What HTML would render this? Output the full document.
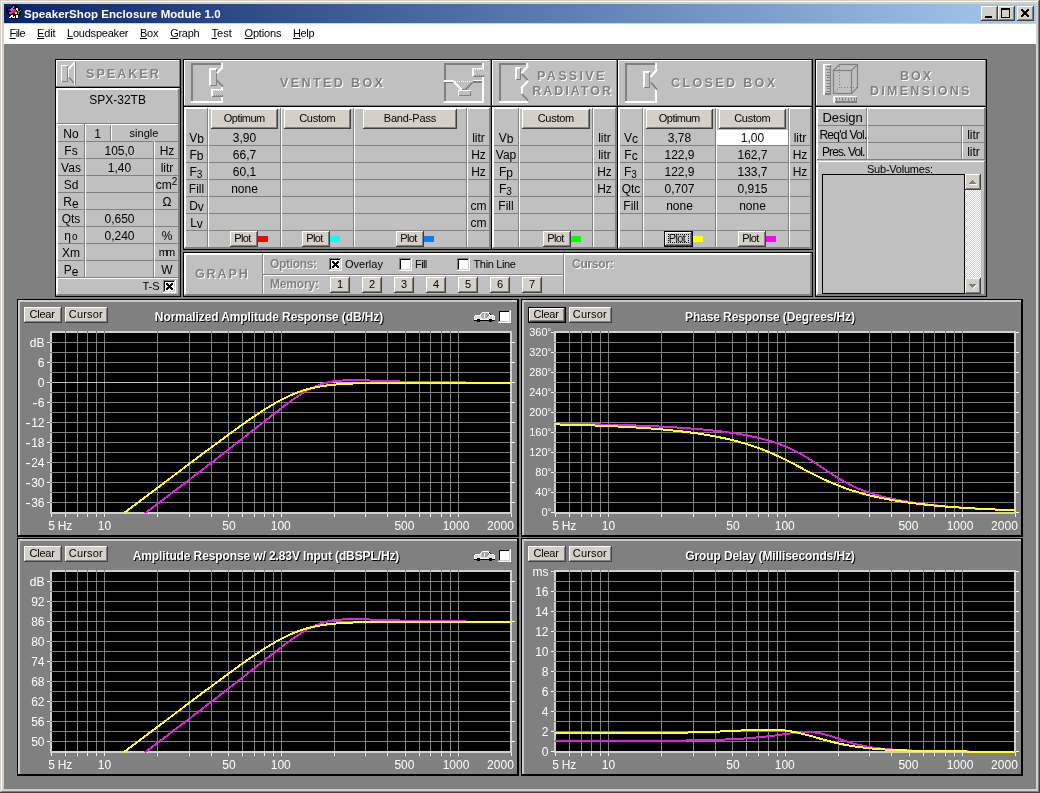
<!DOCTYPE html>
<html><head><meta charset="utf-8"><title>SpeakerShop Enclosure Module 1.0</title>
<style>
html,body{margin:0;padding:0;background:#808080;}
body{width:1040px;height:793px;position:relative;overflow:hidden;font-family:"Liberation Sans",sans-serif;}
#w{position:absolute;left:0;top:0;width:1040px;height:793px;will-change:transform;}
i{position:absolute;display:block;box-sizing:border-box;}
svg{position:absolute;display:block;overflow:visible;}
b.t{position:absolute;display:block;font-weight:normal;white-space:nowrap;overflow:visible;font-style:normal;}
.sb{font-size:10px;position:relative;top:3px;}
sup{font-size:9px;line-height:0;position:relative;top:-1px;vertical-align:super;}
u{text-decoration:underline;}
</style></head>
<body>
<div id="w">
<i style="left:0px;top:0px;width:1040px;height:793px;background:#d4d0c8;"></i>
<i style="left:0px;top:0px;width:1040px;height:1px;background:#d4d0c8;"></i>
<i style="left:0px;top:0px;width:1px;height:793px;background:#d4d0c8;"></i>
<i style="left:1px;top:1px;width:1038px;height:1px;background:#ffffff;"></i>
<i style="left:1px;top:1px;width:1px;height:791px;background:#ffffff;"></i>
<i style="left:0px;top:792px;width:1040px;height:1px;background:#404040;"></i>
<i style="left:1039px;top:0px;width:1px;height:793px;background:#404040;"></i>
<i style="left:1px;top:791px;width:1038px;height:1px;background:#808080;"></i>
<i style="left:1038px;top:1px;width:1px;height:791px;background:#808080;"></i>
<i style="left:4px;top:4px;width:1032px;height:19px;background:;background:linear-gradient(90deg,#0a246a 0%,#a6caf0 100%);"></i>
<i style="left:4px;top:24px;width:1032px;height:20px;background:#ffffff;"></i>
<i style="left:4px;top:44px;width:1032px;height:745px;background:#808080;"></i>
<b class="t" style="left:24.00px;top:8px;height:12px;line-height:12px;font-size:11.5px;color:#fff;font-weight:bold;letter-spacing:0.052px;">SpeakerShop Enclosure Module 1.0</b>
<i style="left:981px;top:6px;width:17px;height:15px;background:#d4d0c8;"></i>
<i style="left:981px;top:6px;width:17px;height:1px;background:#ffffff;"></i>
<i style="left:981px;top:6px;width:1px;height:15px;background:#ffffff;"></i>
<i style="left:981px;top:20px;width:17px;height:1px;background:#404040;"></i>
<i style="left:997px;top:6px;width:1px;height:15px;background:#404040;"></i>
<i style="left:982px;top:19px;width:15px;height:1px;background:#808080;"></i>
<i style="left:996px;top:7px;width:1px;height:13px;background:#808080;"></i>
<i style="left:985px;top:16px;width:7px;height:2px;background:#000000;"></i>
<i style="left:998px;top:6px;width:17px;height:15px;background:#d4d0c8;"></i>
<i style="left:998px;top:6px;width:17px;height:1px;background:#ffffff;"></i>
<i style="left:998px;top:6px;width:1px;height:15px;background:#ffffff;"></i>
<i style="left:998px;top:20px;width:17px;height:1px;background:#404040;"></i>
<i style="left:1014px;top:6px;width:1px;height:15px;background:#404040;"></i>
<i style="left:999px;top:19px;width:15px;height:1px;background:#808080;"></i>
<i style="left:1013px;top:7px;width:1px;height:13px;background:#808080;"></i>
<i style="left:1001px;top:8px;width:9px;height:2px;background:#000000;"></i>
<i style="left:1001px;top:8px;width:1px;height:10px;background:#000000;"></i>
<i style="left:1009px;top:8px;width:1px;height:10px;background:#000000;"></i>
<i style="left:1001px;top:17px;width:9px;height:1px;background:#000000;"></i>
<i style="left:1017px;top:6px;width:17px;height:15px;background:#d4d0c8;"></i>
<i style="left:1017px;top:6px;width:17px;height:1px;background:#ffffff;"></i>
<i style="left:1017px;top:6px;width:1px;height:15px;background:#ffffff;"></i>
<i style="left:1017px;top:20px;width:17px;height:1px;background:#404040;"></i>
<i style="left:1033px;top:6px;width:1px;height:15px;background:#404040;"></i>
<i style="left:1018px;top:19px;width:15px;height:1px;background:#808080;"></i>
<i style="left:1032px;top:7px;width:1px;height:13px;background:#808080;"></i>
<i style="left:1021px;top:9px;width:2px;height:1px;background:#000000;"></i>
<i style="left:1027px;top:9px;width:2px;height:1px;background:#000000;"></i>
<i style="left:1021px;top:10px;width:3px;height:1px;background:#000000;"></i>
<i style="left:1026px;top:10px;width:3px;height:1px;background:#000000;"></i>
<i style="left:1022px;top:11px;width:6px;height:1px;background:#000000;"></i>
<i style="left:1023px;top:12px;width:4px;height:1px;background:#000000;"></i>
<i style="left:1023px;top:13px;width:4px;height:1px;background:#000000;"></i>
<i style="left:1022px;top:14px;width:6px;height:1px;background:#000000;"></i>
<i style="left:1021px;top:15px;width:3px;height:1px;background:#000000;"></i>
<i style="left:1026px;top:15px;width:3px;height:1px;background:#000000;"></i>
<i style="left:1021px;top:16px;width:2px;height:1px;background:#000000;"></i>
<i style="left:1027px;top:16px;width:2px;height:1px;background:#000000;"></i>
<b class="t" style="left:9.50px;top:27px;height:12px;line-height:12px;font-size:11px;color:#000;letter-spacing:-0.573px;"><u>F</u>ile</b>
<b class="t" style="left:37.00px;top:27px;height:12px;line-height:12px;font-size:11px;color:#000;letter-spacing:-0.156px;"><u>E</u>dit</b>
<b class="t" style="left:67.00px;top:27px;height:12px;line-height:12px;font-size:11px;color:#000;letter-spacing:-0.216px;"><u>L</u>oudspeaker</b>
<b class="t" style="left:140.00px;top:27px;height:12px;line-height:12px;font-size:11px;color:#000;letter-spacing:-0.234px;"><u>B</u>ox</b>
<b class="t" style="left:170.20px;top:27px;height:12px;line-height:12px;font-size:11px;color:#000;letter-spacing:-0.273px;"><u>G</u>raph</b>
<b class="t" style="left:211.50px;top:27px;height:12px;line-height:12px;font-size:11px;color:#000;letter-spacing:0.021px;"><u>T</u>est</b>
<b class="t" style="left:244.50px;top:27px;height:12px;line-height:12px;font-size:11px;color:#000;letter-spacing:-0.156px;"><u>O</u>ptions</b>
<b class="t" style="left:293.00px;top:27px;height:12px;line-height:12px;font-size:11px;color:#000;letter-spacing:-0.375px;"><u>H</u>elp</b>
<i style="left:55px;top:59px;width:126px;height:238px;background:#000000;"></i>
<i style="left:56px;top:60px;width:124px;height:236px;background:#c0c0c0;"></i>
<i style="left:56px;top:60px;width:124px;height:1px;background:#ffffff;"></i>
<i style="left:56px;top:60px;width:1px;height:27px;background:#ffffff;"></i>
<i style="left:56px;top:86px;width:124px;height:1px;background:#808080;"></i>
<i style="left:179px;top:60px;width:1px;height:27px;background:#808080;"></i>
<i style="left:56px;top:87px;width:124px;height:1px;background:#000000;"></i>
<b class="t" style="left:87.00px;top:68px;height:14px;line-height:14px;font-size:12.5px;color:#fff;font-weight:bold;letter-spacing:2.039px;">SPEAKER</b>
<b class="t" style="left:86.00px;top:67px;height:14px;line-height:14px;font-size:12.5px;color:#808080;font-weight:bold;letter-spacing:2.039px;">SPEAKER</b>
<i style="left:56px;top:88px;width:124px;height:1px;background:#ffffff;"></i>
<i style="left:56px;top:88px;width:1px;height:208px;background:#ffffff;"></i>
<i style="left:56px;top:295px;width:124px;height:1px;background:#808080;"></i>
<i style="left:179px;top:88px;width:1px;height:208px;background:#808080;"></i>
<i style="left:57px;top:89px;width:122px;height:1px;background:#ffffff;"></i>
<i style="left:57px;top:89px;width:1px;height:35px;background:#ffffff;"></i>
<i style="left:57px;top:123px;width:122px;height:1px;background:#808080;"></i>
<i style="left:178px;top:89px;width:1px;height:35px;background:#808080;"></i>
<b class="t" style="left:89.26px;top:93px;height:14px;line-height:14px;font-size:12px;color:#000;">SPX-32TB</b>
<i style="left:57px;top:124px;width:28px;height:1px;background:#ffffff;"></i>
<i style="left:57px;top:124px;width:1px;height:154px;background:#ffffff;"></i>
<i style="left:57px;top:277px;width:28px;height:1px;background:#808080;"></i>
<i style="left:84px;top:124px;width:1px;height:154px;background:#808080;"></i>
<i style="left:58px;top:141px;width:26px;height:1px;background:#808080;"></i>
<i style="left:58px;top:158px;width:26px;height:1px;background:#808080;"></i>
<i style="left:58px;top:175px;width:26px;height:1px;background:#808080;"></i>
<i style="left:58px;top:192px;width:26px;height:1px;background:#808080;"></i>
<i style="left:58px;top:209px;width:26px;height:1px;background:#808080;"></i>
<i style="left:58px;top:226px;width:26px;height:1px;background:#808080;"></i>
<i style="left:58px;top:243px;width:26px;height:1px;background:#808080;"></i>
<i style="left:58px;top:260px;width:26px;height:1px;background:#808080;"></i>
<i style="left:85px;top:124px;width:69px;height:1px;background:#ffffff;"></i>
<i style="left:85px;top:124px;width:1px;height:154px;background:#ffffff;"></i>
<i style="left:85px;top:277px;width:69px;height:1px;background:#808080;"></i>
<i style="left:153px;top:124px;width:1px;height:154px;background:#808080;"></i>
<i style="left:86px;top:141px;width:67px;height:1px;background:#808080;"></i>
<i style="left:86px;top:158px;width:67px;height:1px;background:#808080;"></i>
<i style="left:86px;top:175px;width:67px;height:1px;background:#808080;"></i>
<i style="left:86px;top:192px;width:67px;height:1px;background:#808080;"></i>
<i style="left:86px;top:209px;width:67px;height:1px;background:#808080;"></i>
<i style="left:86px;top:226px;width:67px;height:1px;background:#808080;"></i>
<i style="left:86px;top:243px;width:67px;height:1px;background:#808080;"></i>
<i style="left:86px;top:260px;width:67px;height:1px;background:#808080;"></i>
<i style="left:154px;top:124px;width:25px;height:1px;background:#ffffff;"></i>
<i style="left:154px;top:124px;width:1px;height:154px;background:#ffffff;"></i>
<i style="left:154px;top:277px;width:25px;height:1px;background:#808080;"></i>
<i style="left:178px;top:124px;width:1px;height:154px;background:#808080;"></i>
<i style="left:155px;top:141px;width:23px;height:1px;background:#808080;"></i>
<i style="left:155px;top:158px;width:23px;height:1px;background:#808080;"></i>
<i style="left:155px;top:175px;width:23px;height:1px;background:#808080;"></i>
<i style="left:155px;top:192px;width:23px;height:1px;background:#808080;"></i>
<i style="left:155px;top:209px;width:23px;height:1px;background:#808080;"></i>
<i style="left:155px;top:226px;width:23px;height:1px;background:#808080;"></i>
<i style="left:155px;top:243px;width:23px;height:1px;background:#808080;"></i>
<i style="left:155px;top:260px;width:23px;height:1px;background:#808080;"></i>
<i style="left:86px;top:125px;width:92px;height:16px;background:#c0c0c0;"></i>
<i style="left:110px;top:125px;width:1px;height:16px;background:#808080;"></i>
<i style="left:111px;top:125px;width:1px;height:16px;background:#ffffff;"></i>
<i style="left:86px;top:141px;width:92px;height:1px;background:#808080;"></i>
<i style="left:153px;top:124px;width:1px;height:18px;background:#c0c0c0;"></i>
<i style="left:154px;top:125px;width:1px;height:17px;background:#c0c0c0;"></i>
<i style="left:86px;top:124px;width:92px;height:1px;background:#ffffff;"></i>
<b class="t" style="left:63.33px;top:127px;height:14px;line-height:14px;font-size:12px;color:#000;">No</b>
<b class="t" style="left:64.34px;top:144px;height:14px;line-height:14px;font-size:12px;color:#000;">Fs</b>
<b class="t" style="left:104.49px;top:144px;height:14px;line-height:14px;font-size:12px;color:#000;">105,0</b>
<b class="t" style="left:159.66px;top:144px;height:14px;line-height:14px;font-size:12px;color:#000;">Hz</b>
<b class="t" style="left:61.11px;top:161px;height:14px;line-height:14px;font-size:12px;color:#000;">Vas</b>
<b class="t" style="left:107.83px;top:161px;height:14px;line-height:14px;font-size:12px;color:#000;">1,40</b>
<b class="t" style="left:160.66px;top:161px;height:14px;line-height:14px;font-size:12px;color:#000;">litr</b>
<b class="t" style="left:63.66px;top:178px;height:14px;line-height:14px;font-size:12px;color:#000;">Sd</b>
<b class="t" style="left:155.66px;top:178px;height:14px;line-height:14px;font-size:12px;color:#000;">cm<span style="font-size:10px;position:relative;top:-4px">2</span></b>
<b class="t" style="left:63.33px;top:195px;height:14px;line-height:14px;font-size:12px;color:#000;">R<span style="position:relative;top:2px">e</span></b>
<b class="t" style="left:162.52px;top:195px;height:14px;line-height:14px;font-size:12px;color:#000;">&Omega;</b>
<b class="t" style="left:61.67px;top:212px;height:14px;line-height:14px;font-size:12px;color:#000;">Qts</b>
<b class="t" style="left:104.49px;top:212px;height:14px;line-height:14px;font-size:12px;color:#000;">0,650</b>
<b class="t" style="left:64.33px;top:229px;height:14px;line-height:14px;font-size:12px;color:#000;">&eta;<span style="font-size:10px;position:relative;top:0px;margin-left:1px">o</span></b>
<b class="t" style="left:104.49px;top:229px;height:14px;line-height:14px;font-size:12px;color:#000;">0,240</b>
<b class="t" style="left:161.66px;top:229px;height:14px;line-height:14px;font-size:12px;color:#000;">%</b>
<b class="t" style="left:62.00px;top:246px;height:14px;line-height:14px;font-size:12px;color:#000;">Xm</b>
<b class="t" style="left:158.80px;top:246px;height:12px;line-height:12px;font-size:11px;color:#000;letter-spacing:-1.913px;">mm</b>
<b class="t" style="left:63.66px;top:263px;height:14px;line-height:14px;font-size:12px;color:#000;">P<span style="position:relative;top:2px">e</span></b>
<b class="t" style="left:161.34px;top:263px;height:14px;line-height:14px;font-size:12px;color:#000;">W</b>
<b class="t" style="left:94.16px;top:127px;height:14px;line-height:14px;font-size:12px;color:#000;">1</b>
<b class="t" style="left:129.62px;top:127px;height:12px;line-height:12px;font-size:11px;color:#000;">single</b>
<i style="left:57px;top:278px;width:122px;height:1px;background:#ffffff;"></i>
<i style="left:57px;top:278px;width:1px;height:17px;background:#ffffff;"></i>
<i style="left:57px;top:294px;width:122px;height:1px;background:#808080;"></i>
<i style="left:178px;top:278px;width:1px;height:17px;background:#808080;"></i>
<b class="t" style="left:142.49px;top:280px;height:12px;line-height:12px;font-size:11px;color:#000;">T-S</b>
<i style="left:163px;top:280px;width:13px;height:13px;background:#ffffff;"></i>
<i style="left:163px;top:280px;width:13px;height:1px;background:#808080;"></i>
<i style="left:163px;top:280px;width:1px;height:13px;background:#808080;"></i>
<i style="left:164px;top:281px;width:11px;height:1px;background:#000000;"></i>
<i style="left:164px;top:281px;width:1px;height:11px;background:#000000;"></i>
<i style="left:163px;top:292px;width:13px;height:1px;background:#ffffff;"></i>
<i style="left:175px;top:280px;width:1px;height:13px;background:#ffffff;"></i>
<i style="left:164px;top:291px;width:11px;height:1px;background:#d4d0c8;"></i>
<i style="left:174px;top:281px;width:1px;height:11px;background:#d4d0c8;"></i>
<i style="left:166px;top:283px;width:2px;height:1px;background:#000000;"></i>
<i style="left:171px;top:283px;width:2px;height:1px;background:#000000;"></i>
<i style="left:166px;top:284px;width:3px;height:1px;background:#000000;"></i>
<i style="left:170px;top:284px;width:3px;height:1px;background:#000000;"></i>
<i style="left:167px;top:285px;width:5px;height:1px;background:#000000;"></i>
<i style="left:168px;top:286px;width:3px;height:1px;background:#000000;"></i>
<i style="left:167px;top:287px;width:5px;height:1px;background:#000000;"></i>
<i style="left:166px;top:288px;width:3px;height:1px;background:#000000;"></i>
<i style="left:170px;top:288px;width:3px;height:1px;background:#000000;"></i>
<i style="left:166px;top:289px;width:2px;height:1px;background:#000000;"></i>
<i style="left:171px;top:289px;width:2px;height:1px;background:#000000;"></i>
<i style="left:183px;top:59px;width:309px;height:191px;background:#000000;"></i>
<i style="left:184px;top:60px;width:307px;height:189px;background:#c0c0c0;"></i>
<i style="left:184px;top:60px;width:307px;height:1px;background:#ffffff;"></i>
<i style="left:184px;top:60px;width:1px;height:46px;background:#ffffff;"></i>
<i style="left:184px;top:105px;width:307px;height:1px;background:#808080;"></i>
<i style="left:490px;top:60px;width:1px;height:46px;background:#808080;"></i>
<i style="left:184px;top:106px;width:307px;height:1px;background:#000000;"></i>
<b class="t" style="left:281.00px;top:77px;height:14px;line-height:14px;font-size:12.5px;color:#fff;font-weight:bold;letter-spacing:2.411px;">VENTED BOX</b>
<b class="t" style="left:280.00px;top:76px;height:14px;line-height:14px;font-size:12.5px;color:#808080;font-weight:bold;letter-spacing:2.411px;">VENTED BOX</b>
<i style="left:184px;top:107px;width:307px;height:1px;background:#ffffff;"></i>
<i style="left:184px;top:107px;width:1px;height:142px;background:#ffffff;"></i>
<i style="left:184px;top:248px;width:307px;height:1px;background:#808080;"></i>
<i style="left:490px;top:107px;width:1px;height:142px;background:#808080;"></i>
<i style="left:185px;top:108px;width:23px;height:1px;background:#ffffff;"></i>
<i style="left:185px;top:108px;width:1px;height:140px;background:#ffffff;"></i>
<i style="left:185px;top:247px;width:23px;height:1px;background:#808080;"></i>
<i style="left:207px;top:108px;width:1px;height:140px;background:#808080;"></i>
<i style="left:186px;top:145px;width:21px;height:1px;background:#808080;"></i>
<i style="left:186px;top:162px;width:21px;height:1px;background:#808080;"></i>
<i style="left:186px;top:179px;width:21px;height:1px;background:#808080;"></i>
<i style="left:186px;top:196px;width:21px;height:1px;background:#808080;"></i>
<i style="left:186px;top:213px;width:21px;height:1px;background:#808080;"></i>
<i style="left:186px;top:230px;width:21px;height:1px;background:#808080;"></i>
<i style="left:208px;top:108px;width:73px;height:1px;background:#ffffff;"></i>
<i style="left:208px;top:108px;width:1px;height:140px;background:#ffffff;"></i>
<i style="left:208px;top:247px;width:73px;height:1px;background:#808080;"></i>
<i style="left:280px;top:108px;width:1px;height:140px;background:#808080;"></i>
<i style="left:209px;top:145px;width:71px;height:1px;background:#808080;"></i>
<i style="left:209px;top:162px;width:71px;height:1px;background:#808080;"></i>
<i style="left:209px;top:179px;width:71px;height:1px;background:#808080;"></i>
<i style="left:209px;top:196px;width:71px;height:1px;background:#808080;"></i>
<i style="left:209px;top:213px;width:71px;height:1px;background:#808080;"></i>
<i style="left:209px;top:230px;width:71px;height:1px;background:#808080;"></i>
<i style="left:281px;top:108px;width:73px;height:1px;background:#ffffff;"></i>
<i style="left:281px;top:108px;width:1px;height:140px;background:#ffffff;"></i>
<i style="left:281px;top:247px;width:73px;height:1px;background:#808080;"></i>
<i style="left:353px;top:108px;width:1px;height:140px;background:#808080;"></i>
<i style="left:282px;top:145px;width:71px;height:1px;background:#808080;"></i>
<i style="left:282px;top:162px;width:71px;height:1px;background:#808080;"></i>
<i style="left:282px;top:179px;width:71px;height:1px;background:#808080;"></i>
<i style="left:282px;top:196px;width:71px;height:1px;background:#808080;"></i>
<i style="left:282px;top:213px;width:71px;height:1px;background:#808080;"></i>
<i style="left:282px;top:230px;width:71px;height:1px;background:#808080;"></i>
<i style="left:354px;top:108px;width:113px;height:1px;background:#ffffff;"></i>
<i style="left:354px;top:108px;width:1px;height:140px;background:#ffffff;"></i>
<i style="left:354px;top:247px;width:113px;height:1px;background:#808080;"></i>
<i style="left:466px;top:108px;width:1px;height:140px;background:#808080;"></i>
<i style="left:355px;top:145px;width:111px;height:1px;background:#808080;"></i>
<i style="left:355px;top:162px;width:111px;height:1px;background:#808080;"></i>
<i style="left:355px;top:179px;width:111px;height:1px;background:#808080;"></i>
<i style="left:355px;top:196px;width:111px;height:1px;background:#808080;"></i>
<i style="left:355px;top:213px;width:111px;height:1px;background:#808080;"></i>
<i style="left:355px;top:230px;width:111px;height:1px;background:#808080;"></i>
<i style="left:467px;top:108px;width:23px;height:1px;background:#ffffff;"></i>
<i style="left:467px;top:108px;width:1px;height:140px;background:#ffffff;"></i>
<i style="left:467px;top:247px;width:23px;height:1px;background:#808080;"></i>
<i style="left:489px;top:108px;width:1px;height:140px;background:#808080;"></i>
<i style="left:468px;top:145px;width:21px;height:1px;background:#808080;"></i>
<i style="left:468px;top:162px;width:21px;height:1px;background:#808080;"></i>
<i style="left:468px;top:179px;width:21px;height:1px;background:#808080;"></i>
<i style="left:468px;top:196px;width:21px;height:1px;background:#808080;"></i>
<i style="left:468px;top:213px;width:21px;height:1px;background:#808080;"></i>
<i style="left:468px;top:230px;width:21px;height:1px;background:#808080;"></i>
<i style="left:211px;top:109px;width:67px;height:20px;background:#d4d0c8;"></i>
<i style="left:211px;top:109px;width:67px;height:1px;background:#ffffff;"></i>
<i style="left:211px;top:109px;width:1px;height:20px;background:#ffffff;"></i>
<i style="left:211px;top:128px;width:67px;height:1px;background:#404040;"></i>
<i style="left:277px;top:109px;width:1px;height:20px;background:#404040;"></i>
<i style="left:212px;top:127px;width:65px;height:1px;background:#808080;"></i>
<i style="left:276px;top:110px;width:1px;height:18px;background:#808080;"></i>
<b class="t" style="left:223.75px;top:112px;height:12px;line-height:12px;font-size:11px;color:#000;letter-spacing:-0.521px;">Optimum</b>
<i style="left:284px;top:109px;width:67px;height:20px;background:#d4d0c8;"></i>
<i style="left:284px;top:109px;width:67px;height:1px;background:#ffffff;"></i>
<i style="left:284px;top:109px;width:1px;height:20px;background:#ffffff;"></i>
<i style="left:284px;top:128px;width:67px;height:1px;background:#404040;"></i>
<i style="left:350px;top:109px;width:1px;height:20px;background:#404040;"></i>
<i style="left:285px;top:127px;width:65px;height:1px;background:#808080;"></i>
<i style="left:349px;top:110px;width:1px;height:18px;background:#808080;"></i>
<b class="t" style="left:299.20px;top:112px;height:12px;line-height:12px;font-size:11px;color:#000;letter-spacing:-0.261px;">Custom</b>
<i style="left:363px;top:109px;width:94px;height:20px;background:#d4d0c8;"></i>
<i style="left:363px;top:109px;width:94px;height:1px;background:#ffffff;"></i>
<i style="left:363px;top:109px;width:1px;height:20px;background:#ffffff;"></i>
<i style="left:363px;top:128px;width:94px;height:1px;background:#404040;"></i>
<i style="left:456px;top:109px;width:1px;height:20px;background:#404040;"></i>
<i style="left:364px;top:127px;width:92px;height:1px;background:#808080;"></i>
<i style="left:455px;top:110px;width:1px;height:18px;background:#808080;"></i>
<b class="t" style="left:383.75px;top:112px;height:12px;line-height:12px;font-size:11px;color:#000;letter-spacing:-0.168px;">Band-Pass</b>
<b class="t" style="left:189.16px;top:131px;height:14px;line-height:14px;font-size:12px;color:#000;">V<span style="position:relative;top:1px">b</span></b>
<b class="t" style="left:189.50px;top:148px;height:14px;line-height:14px;font-size:12px;color:#000;">F<span style="position:relative;top:1px">b</span></b>
<b class="t" style="left:189.50px;top:165px;height:14px;line-height:14px;font-size:12px;color:#000;">F<span style="font-size:10px;position:relative;top:2px">3</span></b>
<b class="t" style="left:188.83px;top:182px;height:14px;line-height:14px;font-size:12px;color:#000;">Fill</b>
<b class="t" style="left:189.16px;top:199px;height:14px;line-height:14px;font-size:12px;color:#000;">D<span style="position:relative;top:1px">v</span></b>
<b class="t" style="left:190.16px;top:216px;height:14px;line-height:14px;font-size:12px;color:#000;">L<span style="position:relative;top:1px">v</span></b>
<b class="t" style="left:232.83px;top:131px;height:14px;line-height:14px;font-size:12px;color:#000;">3,90</b>
<b class="t" style="left:232.83px;top:148px;height:14px;line-height:14px;font-size:12px;color:#000;">66,7</b>
<b class="t" style="left:232.83px;top:165px;height:14px;line-height:14px;font-size:12px;color:#000;">60,1</b>
<b class="t" style="left:231.16px;top:182px;height:14px;line-height:14px;font-size:12px;color:#000;">none</b>
<b class="t" style="left:472.16px;top:131px;height:14px;line-height:14px;font-size:12px;color:#000;">litr</b>
<b class="t" style="left:471.16px;top:148px;height:14px;line-height:14px;font-size:12px;color:#000;">Hz</b>
<b class="t" style="left:471.16px;top:165px;height:14px;line-height:14px;font-size:12px;color:#000;">Hz</b>
<b class="t" style="left:470.50px;top:199px;height:14px;line-height:14px;font-size:12px;color:#000;">cm</b>
<b class="t" style="left:470.50px;top:216px;height:14px;line-height:14px;font-size:12px;color:#000;">cm</b>
<i style="left:230px;top:231px;width:28px;height:16px;background:#d4d0c8;"></i>
<i style="left:230px;top:231px;width:28px;height:1px;background:#ffffff;"></i>
<i style="left:230px;top:231px;width:1px;height:16px;background:#ffffff;"></i>
<i style="left:230px;top:246px;width:28px;height:1px;background:#404040;"></i>
<i style="left:257px;top:231px;width:1px;height:16px;background:#404040;"></i>
<i style="left:231px;top:245px;width:26px;height:1px;background:#808080;"></i>
<i style="left:256px;top:232px;width:1px;height:14px;background:#808080;"></i>
<b class="t" style="left:234.30px;top:232px;height:12px;line-height:12px;font-size:11px;color:#000;letter-spacing:-0.656px;">Plot</b>
<i style="left:258px;top:236px;width:10px;height:6px;background:#ff0000;"></i>
<i style="left:302px;top:231px;width:28px;height:16px;background:#d4d0c8;"></i>
<i style="left:302px;top:231px;width:28px;height:1px;background:#ffffff;"></i>
<i style="left:302px;top:231px;width:1px;height:16px;background:#ffffff;"></i>
<i style="left:302px;top:246px;width:28px;height:1px;background:#404040;"></i>
<i style="left:329px;top:231px;width:1px;height:16px;background:#404040;"></i>
<i style="left:303px;top:245px;width:26px;height:1px;background:#808080;"></i>
<i style="left:328px;top:232px;width:1px;height:14px;background:#808080;"></i>
<b class="t" style="left:306.30px;top:232px;height:12px;line-height:12px;font-size:11px;color:#000;letter-spacing:-0.656px;">Plot</b>
<i style="left:330px;top:236px;width:10px;height:6px;background:#00ffff;"></i>
<i style="left:396px;top:231px;width:28px;height:16px;background:#d4d0c8;"></i>
<i style="left:396px;top:231px;width:28px;height:1px;background:#ffffff;"></i>
<i style="left:396px;top:231px;width:1px;height:16px;background:#ffffff;"></i>
<i style="left:396px;top:246px;width:28px;height:1px;background:#404040;"></i>
<i style="left:423px;top:231px;width:1px;height:16px;background:#404040;"></i>
<i style="left:397px;top:245px;width:26px;height:1px;background:#808080;"></i>
<i style="left:422px;top:232px;width:1px;height:14px;background:#808080;"></i>
<b class="t" style="left:400.30px;top:232px;height:12px;line-height:12px;font-size:11px;color:#000;letter-spacing:-0.656px;">Plot</b>
<i style="left:424px;top:236px;width:10px;height:6px;background:#0080ff;"></i>
<i style="left:491px;top:59px;width:127px;height:191px;background:#000000;"></i>
<i style="left:492px;top:60px;width:125px;height:189px;background:#c0c0c0;"></i>
<i style="left:492px;top:60px;width:125px;height:1px;background:#ffffff;"></i>
<i style="left:492px;top:60px;width:1px;height:46px;background:#ffffff;"></i>
<i style="left:492px;top:105px;width:125px;height:1px;background:#808080;"></i>
<i style="left:616px;top:60px;width:1px;height:46px;background:#808080;"></i>
<i style="left:492px;top:106px;width:125px;height:1px;background:#000000;"></i>
<b class="t" style="left:538.00px;top:70px;height:14px;line-height:14px;font-size:12.5px;color:#fff;font-weight:bold;letter-spacing:2.351px;">PASSIVE</b>
<b class="t" style="left:537.00px;top:69px;height:14px;line-height:14px;font-size:12.5px;color:#808080;font-weight:bold;letter-spacing:2.351px;">PASSIVE</b>
<b class="t" style="left:533.25px;top:85px;height:14px;line-height:14px;font-size:12.5px;color:#fff;font-weight:bold;letter-spacing:1.987px;">RADIATOR</b>
<b class="t" style="left:532.25px;top:84px;height:14px;line-height:14px;font-size:12.5px;color:#808080;font-weight:bold;letter-spacing:1.987px;">RADIATOR</b>
<i style="left:492px;top:107px;width:125px;height:1px;background:#ffffff;"></i>
<i style="left:492px;top:107px;width:1px;height:142px;background:#ffffff;"></i>
<i style="left:492px;top:248px;width:125px;height:1px;background:#808080;"></i>
<i style="left:616px;top:107px;width:1px;height:142px;background:#808080;"></i>
<i style="left:493px;top:108px;width:26px;height:1px;background:#ffffff;"></i>
<i style="left:493px;top:108px;width:1px;height:140px;background:#ffffff;"></i>
<i style="left:493px;top:247px;width:26px;height:1px;background:#808080;"></i>
<i style="left:518px;top:108px;width:1px;height:140px;background:#808080;"></i>
<i style="left:494px;top:145px;width:24px;height:1px;background:#808080;"></i>
<i style="left:494px;top:162px;width:24px;height:1px;background:#808080;"></i>
<i style="left:494px;top:179px;width:24px;height:1px;background:#808080;"></i>
<i style="left:494px;top:196px;width:24px;height:1px;background:#808080;"></i>
<i style="left:494px;top:213px;width:24px;height:1px;background:#808080;"></i>
<i style="left:494px;top:230px;width:24px;height:1px;background:#808080;"></i>
<i style="left:519px;top:108px;width:74px;height:1px;background:#ffffff;"></i>
<i style="left:519px;top:108px;width:1px;height:140px;background:#ffffff;"></i>
<i style="left:519px;top:247px;width:74px;height:1px;background:#808080;"></i>
<i style="left:592px;top:108px;width:1px;height:140px;background:#808080;"></i>
<i style="left:520px;top:145px;width:72px;height:1px;background:#808080;"></i>
<i style="left:520px;top:162px;width:72px;height:1px;background:#808080;"></i>
<i style="left:520px;top:179px;width:72px;height:1px;background:#808080;"></i>
<i style="left:520px;top:196px;width:72px;height:1px;background:#808080;"></i>
<i style="left:520px;top:213px;width:72px;height:1px;background:#808080;"></i>
<i style="left:520px;top:230px;width:72px;height:1px;background:#808080;"></i>
<i style="left:593px;top:108px;width:23px;height:1px;background:#ffffff;"></i>
<i style="left:593px;top:108px;width:1px;height:140px;background:#ffffff;"></i>
<i style="left:593px;top:247px;width:23px;height:1px;background:#808080;"></i>
<i style="left:615px;top:108px;width:1px;height:140px;background:#808080;"></i>
<i style="left:594px;top:145px;width:21px;height:1px;background:#808080;"></i>
<i style="left:594px;top:162px;width:21px;height:1px;background:#808080;"></i>
<i style="left:594px;top:179px;width:21px;height:1px;background:#808080;"></i>
<i style="left:594px;top:196px;width:21px;height:1px;background:#808080;"></i>
<i style="left:594px;top:213px;width:21px;height:1px;background:#808080;"></i>
<i style="left:594px;top:230px;width:21px;height:1px;background:#808080;"></i>
<i style="left:522px;top:109px;width:68px;height:20px;background:#d4d0c8;"></i>
<i style="left:522px;top:109px;width:68px;height:1px;background:#ffffff;"></i>
<i style="left:522px;top:109px;width:1px;height:20px;background:#ffffff;"></i>
<i style="left:522px;top:128px;width:68px;height:1px;background:#404040;"></i>
<i style="left:589px;top:109px;width:1px;height:20px;background:#404040;"></i>
<i style="left:523px;top:127px;width:66px;height:1px;background:#808080;"></i>
<i style="left:588px;top:110px;width:1px;height:18px;background:#808080;"></i>
<b class="t" style="left:537.70px;top:112px;height:12px;line-height:12px;font-size:11px;color:#000;letter-spacing:-0.261px;">Custom</b>
<b class="t" style="left:498.66px;top:131px;height:14px;line-height:14px;font-size:12px;color:#000;">V<span style="position:relative;top:1px">b</span></b>
<b class="t" style="left:495.77px;top:148px;height:14px;line-height:14px;font-size:12px;color:#000;">Vap</b>
<b class="t" style="left:499.00px;top:165px;height:14px;line-height:14px;font-size:12px;color:#000;">F<span style="position:relative;top:1px">p</span></b>
<b class="t" style="left:499.00px;top:182px;height:14px;line-height:14px;font-size:12px;color:#000;">F<span style="font-size:10px;position:relative;top:2px">3</span></b>
<b class="t" style="left:498.33px;top:199px;height:14px;line-height:14px;font-size:12px;color:#000;">Fill</b>
<b class="t" style="left:598.16px;top:131px;height:14px;line-height:14px;font-size:12px;color:#000;">litr</b>
<b class="t" style="left:598.16px;top:148px;height:14px;line-height:14px;font-size:12px;color:#000;">litr</b>
<b class="t" style="left:597.16px;top:165px;height:14px;line-height:14px;font-size:12px;color:#000;">Hz</b>
<b class="t" style="left:597.16px;top:182px;height:14px;line-height:14px;font-size:12px;color:#000;">Hz</b>
<i style="left:543px;top:231px;width:28px;height:16px;background:#d4d0c8;"></i>
<i style="left:543px;top:231px;width:28px;height:1px;background:#ffffff;"></i>
<i style="left:543px;top:231px;width:1px;height:16px;background:#ffffff;"></i>
<i style="left:543px;top:246px;width:28px;height:1px;background:#404040;"></i>
<i style="left:570px;top:231px;width:1px;height:16px;background:#404040;"></i>
<i style="left:544px;top:245px;width:26px;height:1px;background:#808080;"></i>
<i style="left:569px;top:232px;width:1px;height:14px;background:#808080;"></i>
<b class="t" style="left:547.30px;top:232px;height:12px;line-height:12px;font-size:11px;color:#000;letter-spacing:-0.656px;">Plot</b>
<i style="left:571px;top:236px;width:10px;height:6px;background:#00ff00;"></i>
<i style="left:617px;top:59px;width:196px;height:191px;background:#000000;"></i>
<i style="left:618px;top:60px;width:194px;height:189px;background:#c0c0c0;"></i>
<i style="left:618px;top:60px;width:194px;height:1px;background:#ffffff;"></i>
<i style="left:618px;top:60px;width:1px;height:46px;background:#ffffff;"></i>
<i style="left:618px;top:105px;width:194px;height:1px;background:#808080;"></i>
<i style="left:811px;top:60px;width:1px;height:46px;background:#808080;"></i>
<i style="left:618px;top:106px;width:194px;height:1px;background:#000000;"></i>
<b class="t" style="left:672.00px;top:77px;height:14px;line-height:14px;font-size:12.5px;color:#fff;font-weight:bold;letter-spacing:2.370px;">CLOSED BOX</b>
<b class="t" style="left:671.00px;top:76px;height:14px;line-height:14px;font-size:12.5px;color:#808080;font-weight:bold;letter-spacing:2.370px;">CLOSED BOX</b>
<i style="left:618px;top:107px;width:194px;height:1px;background:#ffffff;"></i>
<i style="left:618px;top:107px;width:1px;height:142px;background:#ffffff;"></i>
<i style="left:618px;top:248px;width:194px;height:1px;background:#808080;"></i>
<i style="left:811px;top:107px;width:1px;height:142px;background:#808080;"></i>
<i style="left:619px;top:108px;width:24px;height:1px;background:#ffffff;"></i>
<i style="left:619px;top:108px;width:1px;height:140px;background:#ffffff;"></i>
<i style="left:619px;top:247px;width:24px;height:1px;background:#808080;"></i>
<i style="left:642px;top:108px;width:1px;height:140px;background:#808080;"></i>
<i style="left:620px;top:145px;width:22px;height:1px;background:#808080;"></i>
<i style="left:620px;top:162px;width:22px;height:1px;background:#808080;"></i>
<i style="left:620px;top:179px;width:22px;height:1px;background:#808080;"></i>
<i style="left:620px;top:196px;width:22px;height:1px;background:#808080;"></i>
<i style="left:620px;top:213px;width:22px;height:1px;background:#808080;"></i>
<i style="left:620px;top:230px;width:22px;height:1px;background:#808080;"></i>
<i style="left:643px;top:108px;width:73px;height:1px;background:#ffffff;"></i>
<i style="left:643px;top:108px;width:1px;height:140px;background:#ffffff;"></i>
<i style="left:643px;top:247px;width:73px;height:1px;background:#808080;"></i>
<i style="left:715px;top:108px;width:1px;height:140px;background:#808080;"></i>
<i style="left:644px;top:145px;width:71px;height:1px;background:#808080;"></i>
<i style="left:644px;top:162px;width:71px;height:1px;background:#808080;"></i>
<i style="left:644px;top:179px;width:71px;height:1px;background:#808080;"></i>
<i style="left:644px;top:196px;width:71px;height:1px;background:#808080;"></i>
<i style="left:644px;top:213px;width:71px;height:1px;background:#808080;"></i>
<i style="left:644px;top:230px;width:71px;height:1px;background:#808080;"></i>
<i style="left:716px;top:108px;width:73px;height:1px;background:#ffffff;"></i>
<i style="left:716px;top:108px;width:1px;height:140px;background:#ffffff;"></i>
<i style="left:716px;top:247px;width:73px;height:1px;background:#808080;"></i>
<i style="left:788px;top:108px;width:1px;height:140px;background:#808080;"></i>
<i style="left:717px;top:145px;width:71px;height:1px;background:#808080;"></i>
<i style="left:717px;top:162px;width:71px;height:1px;background:#808080;"></i>
<i style="left:717px;top:179px;width:71px;height:1px;background:#808080;"></i>
<i style="left:717px;top:196px;width:71px;height:1px;background:#808080;"></i>
<i style="left:717px;top:213px;width:71px;height:1px;background:#808080;"></i>
<i style="left:717px;top:230px;width:71px;height:1px;background:#808080;"></i>
<i style="left:789px;top:108px;width:22px;height:1px;background:#ffffff;"></i>
<i style="left:789px;top:108px;width:1px;height:140px;background:#ffffff;"></i>
<i style="left:789px;top:247px;width:22px;height:1px;background:#808080;"></i>
<i style="left:810px;top:108px;width:1px;height:140px;background:#808080;"></i>
<i style="left:790px;top:145px;width:20px;height:1px;background:#808080;"></i>
<i style="left:790px;top:162px;width:20px;height:1px;background:#808080;"></i>
<i style="left:790px;top:179px;width:20px;height:1px;background:#808080;"></i>
<i style="left:790px;top:196px;width:20px;height:1px;background:#808080;"></i>
<i style="left:790px;top:213px;width:20px;height:1px;background:#808080;"></i>
<i style="left:790px;top:230px;width:20px;height:1px;background:#808080;"></i>
<i style="left:646px;top:109px;width:67px;height:20px;background:#d4d0c8;"></i>
<i style="left:646px;top:109px;width:67px;height:1px;background:#ffffff;"></i>
<i style="left:646px;top:109px;width:1px;height:20px;background:#ffffff;"></i>
<i style="left:646px;top:128px;width:67px;height:1px;background:#404040;"></i>
<i style="left:712px;top:109px;width:1px;height:20px;background:#404040;"></i>
<i style="left:647px;top:127px;width:65px;height:1px;background:#808080;"></i>
<i style="left:711px;top:110px;width:1px;height:18px;background:#808080;"></i>
<b class="t" style="left:658.75px;top:112px;height:12px;line-height:12px;font-size:11px;color:#000;letter-spacing:-0.521px;">Optimum</b>
<i style="left:719px;top:109px;width:67px;height:20px;background:#d4d0c8;"></i>
<i style="left:719px;top:109px;width:67px;height:1px;background:#ffffff;"></i>
<i style="left:719px;top:109px;width:1px;height:20px;background:#ffffff;"></i>
<i style="left:719px;top:128px;width:67px;height:1px;background:#404040;"></i>
<i style="left:785px;top:109px;width:1px;height:20px;background:#404040;"></i>
<i style="left:720px;top:127px;width:65px;height:1px;background:#808080;"></i>
<i style="left:784px;top:110px;width:1px;height:18px;background:#808080;"></i>
<b class="t" style="left:734.20px;top:112px;height:12px;line-height:12px;font-size:11px;color:#000;letter-spacing:-0.261px;">Custom</b>
<i style="left:717px;top:130px;width:71px;height:15px;background:#ffffff;"></i>
<b class="t" style="left:624.00px;top:131px;height:14px;line-height:14px;font-size:12px;color:#000;">V<span style="position:relative;top:1px">c</span></b>
<b class="t" style="left:624.34px;top:148px;height:14px;line-height:14px;font-size:12px;color:#000;">F<span style="position:relative;top:1px">c</span></b>
<b class="t" style="left:624.00px;top:165px;height:14px;line-height:14px;font-size:12px;color:#000;">F<span style="font-size:10px;position:relative;top:2px">3</span></b>
<b class="t" style="left:621.67px;top:182px;height:14px;line-height:14px;font-size:12px;color:#000;">Qtc</b>
<b class="t" style="left:623.33px;top:199px;height:14px;line-height:14px;font-size:12px;color:#000;">Fill</b>
<b class="t" style="left:667.83px;top:131px;height:14px;line-height:14px;font-size:12px;color:#000;">3,78</b>
<b class="t" style="left:664.49px;top:148px;height:14px;line-height:14px;font-size:12px;color:#000;">122,9</b>
<b class="t" style="left:664.49px;top:165px;height:14px;line-height:14px;font-size:12px;color:#000;">122,9</b>
<b class="t" style="left:664.49px;top:182px;height:14px;line-height:14px;font-size:12px;color:#000;">0,707</b>
<b class="t" style="left:666.16px;top:199px;height:14px;line-height:14px;font-size:12px;color:#000;">none</b>
<b class="t" style="left:740.83px;top:131px;height:14px;line-height:14px;font-size:12px;color:#000;">1,00</b>
<b class="t" style="left:737.49px;top:148px;height:14px;line-height:14px;font-size:12px;color:#000;">162,7</b>
<b class="t" style="left:737.49px;top:165px;height:14px;line-height:14px;font-size:12px;color:#000;">133,7</b>
<b class="t" style="left:737.49px;top:182px;height:14px;line-height:14px;font-size:12px;color:#000;">0,915</b>
<b class="t" style="left:739.16px;top:199px;height:14px;line-height:14px;font-size:12px;color:#000;">none</b>
<b class="t" style="left:793.66px;top:131px;height:14px;line-height:14px;font-size:12px;color:#000;">litr</b>
<b class="t" style="left:792.66px;top:148px;height:14px;line-height:14px;font-size:12px;color:#000;">Hz</b>
<b class="t" style="left:792.66px;top:165px;height:14px;line-height:14px;font-size:12px;color:#000;">Hz</b>
<i style="left:664px;top:231px;width:29px;height:16px;background:#000000;"></i>
<i style="left:665px;top:232px;width:27px;height:14px;background:#d4d0c8;"></i>
<i style="left:665px;top:232px;width:27px;height:1px;background:#ffffff;"></i>
<i style="left:665px;top:232px;width:1px;height:14px;background:#ffffff;"></i>
<i style="left:665px;top:245px;width:27px;height:1px;background:#404040;"></i>
<i style="left:691px;top:232px;width:1px;height:14px;background:#404040;"></i>
<i style="left:666px;top:244px;width:25px;height:1px;background:#808080;"></i>
<i style="left:690px;top:233px;width:1px;height:12px;background:#808080;"></i>
<b class="t" style="left:668.80px;top:232px;height:12px;line-height:12px;font-size:11px;color:#000;letter-spacing:-0.656px;">Plot</b>
<i style="left:668px;top:234px;width:21px;height:9px;border:1px dotted #000;"></i>
<i style="left:693px;top:236px;width:10px;height:6px;background:#ffff00;"></i>
<i style="left:738px;top:231px;width:28px;height:16px;background:#d4d0c8;"></i>
<i style="left:738px;top:231px;width:28px;height:1px;background:#ffffff;"></i>
<i style="left:738px;top:231px;width:1px;height:16px;background:#ffffff;"></i>
<i style="left:738px;top:246px;width:28px;height:1px;background:#404040;"></i>
<i style="left:765px;top:231px;width:1px;height:16px;background:#404040;"></i>
<i style="left:739px;top:245px;width:26px;height:1px;background:#808080;"></i>
<i style="left:764px;top:232px;width:1px;height:14px;background:#808080;"></i>
<b class="t" style="left:742.30px;top:232px;height:12px;line-height:12px;font-size:11px;color:#000;letter-spacing:-0.656px;">Plot</b>
<i style="left:766px;top:236px;width:10px;height:6px;background:#ff00ff;"></i>
<i style="left:815px;top:59px;width:172px;height:238px;background:#000000;"></i>
<i style="left:816px;top:60px;width:170px;height:236px;background:#c0c0c0;"></i>
<i style="left:816px;top:60px;width:170px;height:1px;background:#ffffff;"></i>
<i style="left:816px;top:60px;width:1px;height:46px;background:#ffffff;"></i>
<i style="left:816px;top:105px;width:170px;height:1px;background:#808080;"></i>
<i style="left:985px;top:60px;width:1px;height:46px;background:#808080;"></i>
<i style="left:816px;top:106px;width:170px;height:1px;background:#000000;"></i>
<b class="t" style="left:901.00px;top:70px;height:14px;line-height:14px;font-size:12.5px;color:#fff;font-weight:bold;letter-spacing:1.953px;">BOX</b>
<b class="t" style="left:900.00px;top:69px;height:14px;line-height:14px;font-size:12.5px;color:#808080;font-weight:bold;letter-spacing:1.953px;">BOX</b>
<b class="t" style="left:871.00px;top:85px;height:14px;line-height:14px;font-size:12.5px;color:#fff;font-weight:bold;letter-spacing:2.246px;">DIMENSIONS</b>
<b class="t" style="left:870.00px;top:84px;height:14px;line-height:14px;font-size:12.5px;color:#808080;font-weight:bold;letter-spacing:2.246px;">DIMENSIONS</b>
<i style="left:816px;top:107px;width:170px;height:1px;background:#ffffff;"></i>
<i style="left:816px;top:107px;width:1px;height:189px;background:#ffffff;"></i>
<i style="left:816px;top:295px;width:170px;height:1px;background:#808080;"></i>
<i style="left:985px;top:107px;width:1px;height:189px;background:#808080;"></i>
<i style="left:817px;top:108px;width:50px;height:1px;background:#ffffff;"></i>
<i style="left:817px;top:108px;width:1px;height:52px;background:#ffffff;"></i>
<i style="left:817px;top:159px;width:50px;height:1px;background:#808080;"></i>
<i style="left:866px;top:108px;width:1px;height:52px;background:#808080;"></i>
<i style="left:818px;top:125px;width:48px;height:1px;background:#808080;"></i>
<i style="left:818px;top:142px;width:48px;height:1px;background:#808080;"></i>
<i style="left:867px;top:108px;width:118px;height:1px;background:#ffffff;"></i>
<i style="left:867px;top:108px;width:1px;height:52px;background:#ffffff;"></i>
<i style="left:867px;top:159px;width:118px;height:1px;background:#808080;"></i>
<i style="left:984px;top:108px;width:1px;height:52px;background:#808080;"></i>
<i style="left:868px;top:125px;width:116px;height:1px;background:#808080;"></i>
<i style="left:868px;top:142px;width:116px;height:1px;background:#808080;"></i>
<i style="left:961px;top:126px;width:1px;height:33px;background:#808080;"></i>
<i style="left:962px;top:126px;width:1px;height:33px;background:#ffffff;"></i>
<b class="t" style="left:822.40px;top:110px;height:15px;line-height:15px;font-size:13px;color:#000;letter-spacing:-0.037px;">Design</b>
<b class="t" style="left:819.40px;top:128px;height:14px;line-height:14px;font-size:12px;color:#000;letter-spacing:-0.714px;">Req'd Vol.</b>
<b class="t" style="left:821.90px;top:145px;height:14px;line-height:14px;font-size:12px;color:#000;letter-spacing:-0.872px;">Pres. Vol.</b>
<b class="t" style="left:967.16px;top:128px;height:14px;line-height:14px;font-size:12px;color:#000;">litr</b>
<b class="t" style="left:967.16px;top:145px;height:14px;line-height:14px;font-size:12px;color:#000;">litr</b>
<i style="left:817px;top:161px;width:168px;height:1px;background:#ffffff;"></i>
<i style="left:817px;top:161px;width:1px;height:134px;background:#ffffff;"></i>
<i style="left:817px;top:294px;width:168px;height:1px;background:#808080;"></i>
<i style="left:984px;top:161px;width:1px;height:134px;background:#808080;"></i>
<b class="t" style="left:867.00px;top:163px;height:12px;line-height:12px;font-size:11px;color:#000;letter-spacing:-0.229px;">Sub-Volumes:</b>
<i style="left:822px;top:174px;width:143px;height:120px;background:#000000;"></i>
<i style="left:823px;top:175px;width:141px;height:118px;background:#c0c0c0;"></i>
<i style="left:965px;top:174px;width:16px;height:120px;background-color:#d4d0c8;background-image:repeating-conic-gradient(#fff 0% 25%, #d4d0c8 0% 50%);background-size:2px 2px;"></i>
<i style="left:965px;top:174px;width:16px;height:16px;background:#d4d0c8;"></i>
<i style="left:965px;top:174px;width:16px;height:1px;background:#ffffff;"></i>
<i style="left:965px;top:174px;width:1px;height:16px;background:#ffffff;"></i>
<i style="left:965px;top:189px;width:16px;height:1px;background:#404040;"></i>
<i style="left:980px;top:174px;width:1px;height:16px;background:#404040;"></i>
<i style="left:966px;top:188px;width:14px;height:1px;background:#808080;"></i>
<i style="left:979px;top:175px;width:1px;height:14px;background:#808080;"></i>
<i style="left:973px;top:181px;width:1px;height:1px;background:#ffffff;"></i>
<i style="left:972px;top:182px;width:3px;height:1px;background:#ffffff;"></i>
<i style="left:971px;top:183px;width:5px;height:1px;background:#ffffff;"></i>
<i style="left:970px;top:184px;width:7px;height:1px;background:#ffffff;"></i>
<i style="left:972px;top:180px;width:1px;height:1px;background:#808080;"></i>
<i style="left:971px;top:181px;width:3px;height:1px;background:#808080;"></i>
<i style="left:970px;top:182px;width:5px;height:1px;background:#808080;"></i>
<i style="left:969px;top:183px;width:7px;height:1px;background:#808080;"></i>
<i style="left:965px;top:278px;width:16px;height:16px;background:#d4d0c8;"></i>
<i style="left:965px;top:278px;width:16px;height:1px;background:#ffffff;"></i>
<i style="left:965px;top:278px;width:1px;height:16px;background:#ffffff;"></i>
<i style="left:965px;top:293px;width:16px;height:1px;background:#404040;"></i>
<i style="left:980px;top:278px;width:1px;height:16px;background:#404040;"></i>
<i style="left:966px;top:292px;width:14px;height:1px;background:#808080;"></i>
<i style="left:979px;top:279px;width:1px;height:14px;background:#808080;"></i>
<i style="left:973px;top:288px;width:1px;height:1px;background:#ffffff;"></i>
<i style="left:972px;top:287px;width:3px;height:1px;background:#ffffff;"></i>
<i style="left:971px;top:286px;width:5px;height:1px;background:#ffffff;"></i>
<i style="left:970px;top:285px;width:7px;height:1px;background:#ffffff;"></i>
<i style="left:972px;top:287px;width:1px;height:1px;background:#808080;"></i>
<i style="left:971px;top:286px;width:3px;height:1px;background:#808080;"></i>
<i style="left:970px;top:285px;width:5px;height:1px;background:#808080;"></i>
<i style="left:969px;top:284px;width:7px;height:1px;background:#808080;"></i>
<i style="left:183px;top:252px;width:630px;height:45px;background:#000000;"></i>
<i style="left:184px;top:253px;width:628px;height:43px;background:#c0c0c0;"></i>
<i style="left:184px;top:253px;width:628px;height:1px;background:#ffffff;"></i>
<i style="left:184px;top:253px;width:1px;height:43px;background:#ffffff;"></i>
<i style="left:184px;top:295px;width:628px;height:1px;background:#808080;"></i>
<i style="left:811px;top:253px;width:1px;height:43px;background:#808080;"></i>
<i style="left:185px;top:254px;width:78px;height:1px;background:#ffffff;"></i>
<i style="left:185px;top:254px;width:1px;height:41px;background:#ffffff;"></i>
<i style="left:185px;top:294px;width:78px;height:1px;background:#808080;"></i>
<i style="left:262px;top:254px;width:1px;height:41px;background:#808080;"></i>
<b class="t" style="left:196.00px;top:268px;height:14px;line-height:14px;font-size:12.5px;color:#fff;font-weight:bold;letter-spacing:1.898px;">GRAPH</b>
<b class="t" style="left:195.00px;top:267px;height:14px;line-height:14px;font-size:12.5px;color:#808080;font-weight:bold;letter-spacing:1.898px;">GRAPH</b>
<i style="left:263px;top:254px;width:301px;height:1px;background:#ffffff;"></i>
<i style="left:263px;top:254px;width:1px;height:21px;background:#ffffff;"></i>
<i style="left:263px;top:274px;width:301px;height:1px;background:#808080;"></i>
<i style="left:563px;top:254px;width:1px;height:21px;background:#808080;"></i>
<i style="left:263px;top:275px;width:301px;height:1px;background:#ffffff;"></i>
<i style="left:263px;top:275px;width:1px;height:20px;background:#ffffff;"></i>
<i style="left:263px;top:294px;width:301px;height:1px;background:#808080;"></i>
<i style="left:563px;top:275px;width:1px;height:20px;background:#808080;"></i>
<i style="left:564px;top:254px;width:247px;height:1px;background:#ffffff;"></i>
<i style="left:564px;top:254px;width:1px;height:41px;background:#ffffff;"></i>
<i style="left:564px;top:294px;width:247px;height:1px;background:#808080;"></i>
<i style="left:810px;top:254px;width:1px;height:41px;background:#808080;"></i>
<b class="t" style="left:271.00px;top:258px;height:14px;line-height:14px;font-size:12px;color:#fff;font-weight:bold;letter-spacing:-0.330px;">Options:</b>
<b class="t" style="left:270.00px;top:257px;height:14px;line-height:14px;font-size:12px;color:#808080;font-weight:bold;letter-spacing:-0.330px;">Options:</b>
<b class="t" style="left:271.00px;top:278px;height:14px;line-height:14px;font-size:12px;color:#fff;font-weight:bold;letter-spacing:-0.169px;">Memory:</b>
<b class="t" style="left:270.00px;top:277px;height:14px;line-height:14px;font-size:12px;color:#808080;font-weight:bold;letter-spacing:-0.169px;">Memory:</b>
<b class="t" style="left:573.00px;top:258px;height:14px;line-height:14px;font-size:12px;color:#fff;font-weight:bold;letter-spacing:-0.266px;">Cursor:</b>
<b class="t" style="left:572.00px;top:257px;height:14px;line-height:14px;font-size:12px;color:#808080;font-weight:bold;letter-spacing:-0.266px;">Cursor:</b>
<i style="left:329px;top:258px;width:13px;height:13px;background:#ffffff;"></i>
<i style="left:329px;top:258px;width:13px;height:1px;background:#808080;"></i>
<i style="left:329px;top:258px;width:1px;height:13px;background:#808080;"></i>
<i style="left:330px;top:259px;width:11px;height:1px;background:#000000;"></i>
<i style="left:330px;top:259px;width:1px;height:11px;background:#000000;"></i>
<i style="left:329px;top:270px;width:13px;height:1px;background:#ffffff;"></i>
<i style="left:341px;top:258px;width:1px;height:13px;background:#ffffff;"></i>
<i style="left:330px;top:269px;width:11px;height:1px;background:#d4d0c8;"></i>
<i style="left:340px;top:259px;width:1px;height:11px;background:#d4d0c8;"></i>
<i style="left:332px;top:261px;width:2px;height:1px;background:#000000;"></i>
<i style="left:337px;top:261px;width:2px;height:1px;background:#000000;"></i>
<i style="left:332px;top:262px;width:3px;height:1px;background:#000000;"></i>
<i style="left:336px;top:262px;width:3px;height:1px;background:#000000;"></i>
<i style="left:333px;top:263px;width:5px;height:1px;background:#000000;"></i>
<i style="left:334px;top:264px;width:3px;height:1px;background:#000000;"></i>
<i style="left:333px;top:265px;width:5px;height:1px;background:#000000;"></i>
<i style="left:332px;top:266px;width:3px;height:1px;background:#000000;"></i>
<i style="left:336px;top:266px;width:3px;height:1px;background:#000000;"></i>
<i style="left:332px;top:267px;width:2px;height:1px;background:#000000;"></i>
<i style="left:337px;top:267px;width:2px;height:1px;background:#000000;"></i>
<b class="t" style="left:345.00px;top:258px;height:12px;line-height:12px;font-size:11px;color:#000;letter-spacing:-0.001px;">Overlay</b>
<i style="left:399px;top:258px;width:13px;height:13px;background:#ffffff;"></i>
<i style="left:399px;top:258px;width:13px;height:1px;background:#808080;"></i>
<i style="left:399px;top:258px;width:1px;height:13px;background:#808080;"></i>
<i style="left:400px;top:259px;width:11px;height:1px;background:#000000;"></i>
<i style="left:400px;top:259px;width:1px;height:11px;background:#000000;"></i>
<i style="left:399px;top:270px;width:13px;height:1px;background:#ffffff;"></i>
<i style="left:411px;top:258px;width:1px;height:13px;background:#ffffff;"></i>
<i style="left:400px;top:269px;width:11px;height:1px;background:#d4d0c8;"></i>
<i style="left:410px;top:259px;width:1px;height:11px;background:#d4d0c8;"></i>
<b class="t" style="left:415.00px;top:258px;height:12px;line-height:12px;font-size:11px;color:#000;letter-spacing:-0.594px;">Fill</b>
<i style="left:457px;top:258px;width:13px;height:13px;background:#ffffff;"></i>
<i style="left:457px;top:258px;width:13px;height:1px;background:#808080;"></i>
<i style="left:457px;top:258px;width:1px;height:13px;background:#808080;"></i>
<i style="left:458px;top:259px;width:11px;height:1px;background:#000000;"></i>
<i style="left:458px;top:259px;width:1px;height:11px;background:#000000;"></i>
<i style="left:457px;top:270px;width:13px;height:1px;background:#ffffff;"></i>
<i style="left:469px;top:258px;width:1px;height:13px;background:#ffffff;"></i>
<i style="left:458px;top:269px;width:11px;height:1px;background:#d4d0c8;"></i>
<i style="left:468px;top:259px;width:1px;height:11px;background:#d4d0c8;"></i>
<b class="t" style="left:473.50px;top:258px;height:12px;line-height:12px;font-size:11px;color:#000;letter-spacing:-0.348px;">Thin Line</b>
<i style="left:330px;top:277px;width:20px;height:16px;background:#d4d0c8;"></i>
<i style="left:330px;top:277px;width:20px;height:1px;background:#ffffff;"></i>
<i style="left:330px;top:277px;width:1px;height:16px;background:#ffffff;"></i>
<i style="left:330px;top:292px;width:20px;height:1px;background:#404040;"></i>
<i style="left:349px;top:277px;width:1px;height:16px;background:#404040;"></i>
<i style="left:331px;top:291px;width:18px;height:1px;background:#808080;"></i>
<i style="left:348px;top:278px;width:1px;height:14px;background:#808080;"></i>
<b class="t" style="left:336.94px;top:278px;height:12px;line-height:12px;font-size:11px;color:#000;">1</b>
<i style="left:362px;top:277px;width:20px;height:16px;background:#d4d0c8;"></i>
<i style="left:362px;top:277px;width:20px;height:1px;background:#ffffff;"></i>
<i style="left:362px;top:277px;width:1px;height:16px;background:#ffffff;"></i>
<i style="left:362px;top:292px;width:20px;height:1px;background:#404040;"></i>
<i style="left:381px;top:277px;width:1px;height:16px;background:#404040;"></i>
<i style="left:363px;top:291px;width:18px;height:1px;background:#808080;"></i>
<i style="left:380px;top:278px;width:1px;height:14px;background:#808080;"></i>
<b class="t" style="left:368.94px;top:278px;height:12px;line-height:12px;font-size:11px;color:#000;">2</b>
<i style="left:394px;top:277px;width:20px;height:16px;background:#d4d0c8;"></i>
<i style="left:394px;top:277px;width:20px;height:1px;background:#ffffff;"></i>
<i style="left:394px;top:277px;width:1px;height:16px;background:#ffffff;"></i>
<i style="left:394px;top:292px;width:20px;height:1px;background:#404040;"></i>
<i style="left:413px;top:277px;width:1px;height:16px;background:#404040;"></i>
<i style="left:395px;top:291px;width:18px;height:1px;background:#808080;"></i>
<i style="left:412px;top:278px;width:1px;height:14px;background:#808080;"></i>
<b class="t" style="left:400.94px;top:278px;height:12px;line-height:12px;font-size:11px;color:#000;">3</b>
<i style="left:426px;top:277px;width:20px;height:16px;background:#d4d0c8;"></i>
<i style="left:426px;top:277px;width:20px;height:1px;background:#ffffff;"></i>
<i style="left:426px;top:277px;width:1px;height:16px;background:#ffffff;"></i>
<i style="left:426px;top:292px;width:20px;height:1px;background:#404040;"></i>
<i style="left:445px;top:277px;width:1px;height:16px;background:#404040;"></i>
<i style="left:427px;top:291px;width:18px;height:1px;background:#808080;"></i>
<i style="left:444px;top:278px;width:1px;height:14px;background:#808080;"></i>
<b class="t" style="left:432.94px;top:278px;height:12px;line-height:12px;font-size:11px;color:#000;">4</b>
<i style="left:458px;top:277px;width:20px;height:16px;background:#d4d0c8;"></i>
<i style="left:458px;top:277px;width:20px;height:1px;background:#ffffff;"></i>
<i style="left:458px;top:277px;width:1px;height:16px;background:#ffffff;"></i>
<i style="left:458px;top:292px;width:20px;height:1px;background:#404040;"></i>
<i style="left:477px;top:277px;width:1px;height:16px;background:#404040;"></i>
<i style="left:459px;top:291px;width:18px;height:1px;background:#808080;"></i>
<i style="left:476px;top:278px;width:1px;height:14px;background:#808080;"></i>
<b class="t" style="left:464.94px;top:278px;height:12px;line-height:12px;font-size:11px;color:#000;">5</b>
<i style="left:490px;top:277px;width:20px;height:16px;background:#d4d0c8;"></i>
<i style="left:490px;top:277px;width:20px;height:1px;background:#ffffff;"></i>
<i style="left:490px;top:277px;width:1px;height:16px;background:#ffffff;"></i>
<i style="left:490px;top:292px;width:20px;height:1px;background:#404040;"></i>
<i style="left:509px;top:277px;width:1px;height:16px;background:#404040;"></i>
<i style="left:491px;top:291px;width:18px;height:1px;background:#808080;"></i>
<i style="left:508px;top:278px;width:1px;height:14px;background:#808080;"></i>
<b class="t" style="left:496.94px;top:278px;height:12px;line-height:12px;font-size:11px;color:#000;">6</b>
<i style="left:522px;top:277px;width:20px;height:16px;background:#d4d0c8;"></i>
<i style="left:522px;top:277px;width:20px;height:1px;background:#ffffff;"></i>
<i style="left:522px;top:277px;width:1px;height:16px;background:#ffffff;"></i>
<i style="left:522px;top:292px;width:20px;height:1px;background:#404040;"></i>
<i style="left:541px;top:277px;width:1px;height:16px;background:#404040;"></i>
<i style="left:523px;top:291px;width:18px;height:1px;background:#808080;"></i>
<i style="left:540px;top:278px;width:1px;height:14px;background:#808080;"></i>
<b class="t" style="left:528.94px;top:278px;height:12px;line-height:12px;font-size:11px;color:#000;">7</b>
<i style="left:17px;top:299px;width:502px;height:238px;background:#000000;"></i>
<i style="left:18px;top:300px;width:499px;height:235px;background:#cacaca;"></i>
<i style="left:20px;top:302px;width:497px;height:233px;background:#808080;"></i>
<i style="left:24px;top:307px;width:38px;height:16px;background:#d4d0c8;"></i>
<i style="left:24px;top:307px;width:38px;height:1px;background:#ffffff;"></i>
<i style="left:24px;top:307px;width:1px;height:16px;background:#ffffff;"></i>
<i style="left:24px;top:322px;width:38px;height:1px;background:#404040;"></i>
<i style="left:61px;top:307px;width:1px;height:16px;background:#404040;"></i>
<i style="left:25px;top:321px;width:36px;height:1px;background:#808080;"></i>
<i style="left:60px;top:308px;width:1px;height:14px;background:#808080;"></i>
<b class="t" style="left:29.60px;top:308px;height:12px;line-height:12px;font-size:11px;color:#000;letter-spacing:-0.270px;">Clear</b>
<i style="left:65px;top:307px;width:43px;height:16px;background:#d4d0c8;"></i>
<i style="left:65px;top:307px;width:43px;height:1px;background:#ffffff;"></i>
<i style="left:65px;top:307px;width:1px;height:16px;background:#ffffff;"></i>
<i style="left:65px;top:322px;width:43px;height:1px;background:#404040;"></i>
<i style="left:107px;top:307px;width:1px;height:16px;background:#404040;"></i>
<i style="left:66px;top:321px;width:41px;height:1px;background:#808080;"></i>
<i style="left:106px;top:308px;width:1px;height:14px;background:#808080;"></i>
<b class="t" style="left:68.85px;top:308px;height:12px;line-height:12px;font-size:11px;color:#000;letter-spacing:0.140px;">Cursor</b>
<b class="t" style="left:155.87px;top:311px;height:14px;line-height:14px;font-size:12px;color:#000;font-weight:bold;letter-spacing:-0.110px;">Normalized Amplitude Response (dB/Hz)</b>
<b class="t" style="left:154.87px;top:310px;height:14px;line-height:14px;font-size:12px;color:#fff;font-weight:bold;letter-spacing:-0.110px;">Normalized Amplitude Response (dB/Hz)</b>
<i style="left:498px;top:310px;width:13px;height:13px;background:#ffffff;"></i>
<i style="left:498px;top:310px;width:13px;height:1px;background:#808080;"></i>
<i style="left:498px;top:310px;width:1px;height:13px;background:#808080;"></i>
<i style="left:499px;top:311px;width:11px;height:1px;background:#000000;"></i>
<i style="left:499px;top:311px;width:1px;height:11px;background:#000000;"></i>
<i style="left:498px;top:322px;width:13px;height:1px;background:#ffffff;"></i>
<i style="left:510px;top:310px;width:1px;height:13px;background:#ffffff;"></i>
<i style="left:499px;top:321px;width:11px;height:1px;background:#d4d0c8;"></i>
<i style="left:509px;top:311px;width:1px;height:11px;background:#d4d0c8;"></i>
<i style="left:50px;top:331px;width:462px;height:183px;background:#d0d0d0;"></i>
<i style="left:52px;top:333px;width:458px;height:179px;background:#000000;"></i>
<svg style="left:50px;top:331px" width="462" height="183" viewBox="0 0 462 183"><path d="M15.5 0V181M27.5 0V181M37.5 0V181M46.5 0V181M54.5 0V181M107.5 0V181M139.5 0V181M161.5 0V181M178.5 0V181M192.5 0V181M204.5 0V181M214.5 0V181M223.5 0V181M231.5 0V181M284.5 0V181M315.5 0V181M337.5 0V181M355.5 0V181M369.5 0V181M380.5 0V181M391.5 0V181M400.5 0V181M408.5 0V181M0 11.5H460M0 21.5H460M0 31.5H460M0 41.5H460M0 51.5H460M0 61.5H460M0 71.5H460M0 81.5H460M0 91.5H460M0 101.5H460M0 111.5H460M0 121.5H460M0 131.5H460M0 141.5H460M0 151.5H460M0 161.5H460M0 171.5H460" stroke="#808080" fill="none" shape-rendering="crispEdges"/><path d="M2 51.5H460" stroke="#c0c0c0" fill="none" shape-rendering="crispEdges"/><polyline points="95.0 182.3 96.0 181.6 97.0 180.8 98.0 180.1 99.0 179.3 100.0 178.6 101.0 177.8 102.0 177.0 103.0 176.3 104.0 175.5 105.0 174.8 106.0 174.0 107.0 173.2 108.0 172.5 109.0 171.7 110.0 171.0 111.0 170.2 112.0 169.4 113.0 168.7 114.0 167.9 115.0 167.2 116.0 166.4 117.0 165.7 118.0 164.9 119.0 164.1 120.0 163.4 121.0 162.6 122.0 161.9 123.0 161.1 124.0 160.3 125.0 159.6 126.0 158.8 127.0 158.0 128.0 157.3 129.0 156.5 130.0 155.8 131.0 155.0 132.0 154.2 133.0 153.5 134.0 152.7 135.0 151.9 136.0 151.2 137.0 150.4 138.0 149.7 139.0 148.9 140.0 148.1 141.0 147.4 142.0 146.6 143.0 145.8 144.0 145.1 145.0 144.3 146.0 143.5 147.0 142.8 148.0 142.0 149.0 141.2 150.0 140.5 151.0 139.7 152.0 138.9 153.0 138.2 154.0 137.4 155.0 136.6 156.0 135.9 157.0 135.1 158.0 134.3 159.0 133.6 160.0 132.8 161.0 132.0 162.0 131.2 163.0 130.5 164.0 129.7 165.0 128.9 166.0 128.2 167.0 127.4 168.0 126.6 169.0 125.8 170.0 125.1 171.0 124.3 172.0 123.5 173.0 122.7 174.0 122.0 175.0 121.2 176.0 120.4 177.0 119.6 178.0 118.9 179.0 118.1 180.0 117.3 181.0 116.5 182.0 115.7 183.0 115.0 184.0 114.2 185.0 113.4 186.0 112.6 187.0 111.8 188.0 111.1 189.0 110.3 190.0 109.5 191.0 108.7 192.0 107.9 193.0 107.1 194.0 106.4 195.0 105.6 196.0 104.8 197.0 104.0 198.0 103.2 199.0 102.4 200.0 101.6 201.0 100.8 202.0 100.1 203.0 99.3 204.0 98.5 205.0 97.7 206.0 96.9 207.0 96.1 208.0 95.3 209.0 94.5 210.0 93.8 211.0 93.0 212.0 92.2 213.0 91.4 214.0 90.6 215.0 89.8 216.0 89.0 217.0 88.2 218.0 87.4 219.0 86.7 220.0 85.9 221.0 85.1 222.0 84.3 223.0 83.5 224.0 82.8 225.0 82.0 226.0 81.2 227.0 80.4 228.0 79.7 229.0 78.9 230.0 78.1 231.0 77.4 232.0 76.6 233.0 75.8 234.0 75.1 235.0 74.3 236.0 73.6 237.0 72.8 238.0 72.1 239.0 71.4 240.0 70.6 241.0 69.9 242.0 69.2 243.0 68.5 244.0 67.8 245.0 67.1 246.0 66.4 247.0 65.8 248.0 65.1 249.0 64.4 250.0 63.8 251.0 63.2 252.0 62.5 253.0 61.9 254.0 61.3 255.0 60.7 256.0 60.2 257.0 59.6 258.0 59.1 259.0 58.5 260.0 58.0 261.0 57.5 262.0 57.0 263.0 56.5 264.0 56.1 265.0 55.6 266.0 55.2 267.0 54.8 268.0 54.4 269.0 54.0 270.0 53.7 271.0 53.3 272.0 53.0 273.0 52.7 274.0 52.4 275.0 52.1 276.0 51.9 277.0 51.6 278.0 51.4 279.0 51.2 280.0 51.0 281.0 50.8 282.0 50.6 283.0 50.4 284.0 50.3 285.0 50.1 286.0 50.0 287.0 49.9 288.0 49.8 289.0 49.7 290.0 49.6 291.0 49.5 292.0 49.5 293.0 49.4 294.0 49.3 295.0 49.3 296.0 49.3 297.0 49.2 298.0 49.2 299.0 49.2 300.0 49.2 301.0 49.1 302.0 49.1 303.0 49.1 304.0 49.1 305.0 49.1 306.0 49.2 307.0 49.2 308.0 49.2 309.0 49.2 310.0 49.2 311.0 49.2 312.0 49.3 313.0 49.3 314.0 49.3 315.0 49.3 316.0 49.4 317.0 49.4 318.0 49.4 319.0 49.4 320.0 49.5 321.0 49.5 322.0 49.5 323.0 49.6 324.0 49.6 325.0 49.7 326.0 49.7 327.0 49.7 328.0 49.8 329.0 49.8 330.0 49.8 331.0 49.9 332.0 49.9 333.0 49.9 334.0 50.0 335.0 50.0 336.0 50.0 337.0 50.1 338.0 50.1 339.0 50.1 340.0 50.2 341.0 50.2 342.0 50.2 343.0 50.3 344.0 50.3 345.0 50.3 346.0 50.3 347.0 50.4 348.0 50.4 349.0 50.4 350.0 50.5 351.0 50.5 352.0 50.5 353.0 50.5 354.0 50.6 355.0 50.6 356.0 50.6 357.0 50.6 358.0 50.7 359.0 50.7 360.0 50.7 361.0 50.7 362.0 50.8 363.0 50.8 364.0 50.8 365.0 50.8 366.0 50.8 367.0 50.9 368.0 50.9 369.0 50.9 370.0 50.9 371.0 50.9 372.0 51.0 373.0 51.0 374.0 51.0 375.0 51.0 376.0 51.0 377.0 51.0 378.0 51.1 379.0 51.1 380.0 51.1 381.0 51.1 382.0 51.1 383.0 51.1 384.0 51.2 385.0 51.2 386.0 51.2 387.0 51.2 388.0 51.2 389.0 51.2 390.0 51.2 391.0 51.2 392.0 51.3 393.0 51.3 394.0 51.3 395.0 51.3 396.0 51.3 397.0 51.3 398.0 51.3 399.0 51.3 400.0 51.3 401.0 51.3 402.0 51.4 403.0 51.4 404.0 51.4 405.0 51.4 406.0 51.4 407.0 51.4 408.0 51.4 409.0 51.4 410.0 51.4 411.0 51.4 412.0 51.4 413.0 51.4 414.0 51.4 415.0 51.4 416.0 51.5 417.0 51.5 418.0 51.5 419.0 51.5 420.0 51.5 421.0 51.5 422.0 51.5 423.0 51.5 424.0 51.5 425.0 51.5 426.0 51.5 427.0 51.5 428.0 51.5 429.0 51.5 430.0 51.5 431.0 51.5 432.0 51.5 433.0 51.5 434.0 51.5 435.0 51.5 436.0 51.6 437.0 51.6 438.0 51.6 439.0 51.6 440.0 51.6 441.0 51.6 442.0 51.6 443.0 51.6 444.0 51.6 445.0 51.6 446.0 51.6 447.0 51.6 448.0 51.6 449.0 51.6 450.0 51.6 451.0 51.6 452.0 51.6 453.0 51.6 454.0 51.6 455.0 51.6 456.0 51.6 457.0 51.6 458.0 51.6 459.0 51.6 460.0 51.6 461.0 51.6" fill="none" stroke="#e020e0" stroke-width="2" stroke-linejoin="round" shape-rendering="crispEdges"/><polyline points="74.0 182.1 75.0 181.3 76.0 180.6 77.0 179.8 78.0 179.0 79.0 178.3 80.0 177.5 81.0 176.8 82.0 176.0 83.0 175.3 84.0 174.5 85.0 173.8 86.0 173.0 87.0 172.3 88.0 171.5 89.0 170.7 90.0 170.0 91.0 169.2 92.0 168.5 93.0 167.7 94.0 167.0 95.0 166.2 96.0 165.5 97.0 164.7 98.0 164.0 99.0 163.2 100.0 162.5 101.0 161.7 102.0 160.9 103.0 160.2 104.0 159.4 105.0 158.7 106.0 157.9 107.0 157.2 108.0 156.4 109.0 155.7 110.0 154.9 111.0 154.2 112.0 153.4 113.0 152.7 114.0 151.9 115.0 151.2 116.0 150.4 117.0 149.6 118.0 148.9 119.0 148.1 120.0 147.4 121.0 146.6 122.0 145.9 123.0 145.1 124.0 144.4 125.0 143.6 126.0 142.9 127.0 142.1 128.0 141.4 129.0 140.6 130.0 139.9 131.0 139.1 132.0 138.4 133.0 137.6 134.0 136.9 135.0 136.1 136.0 135.3 137.0 134.6 138.0 133.8 139.0 133.1 140.0 132.3 141.0 131.6 142.0 130.8 143.0 130.1 144.0 129.3 145.0 128.6 146.0 127.8 147.0 127.1 148.0 126.3 149.0 125.6 150.0 124.8 151.0 124.1 152.0 123.3 153.0 122.6 154.0 121.8 155.0 121.1 156.0 120.3 157.0 119.6 158.0 118.9 159.0 118.1 160.0 117.4 161.0 116.6 162.0 115.9 163.0 115.1 164.0 114.4 165.0 113.6 166.0 112.9 167.0 112.1 168.0 111.4 169.0 110.7 170.0 109.9 171.0 109.2 172.0 108.4 173.0 107.7 174.0 107.0 175.0 106.2 176.0 105.5 177.0 104.8 178.0 104.0 179.0 103.3 180.0 102.6 181.0 101.8 182.0 101.1 183.0 100.4 184.0 99.6 185.0 98.9 186.0 98.2 187.0 97.5 188.0 96.7 189.0 96.0 190.0 95.3 191.0 94.6 192.0 93.9 193.0 93.2 194.0 92.5 195.0 91.7 196.0 91.0 197.0 90.3 198.0 89.6 199.0 88.9 200.0 88.2 201.0 87.6 202.0 86.9 203.0 86.2 204.0 85.5 205.0 84.8 206.0 84.1 207.0 83.5 208.0 82.8 209.0 82.1 210.0 81.5 211.0 80.8 212.0 80.2 213.0 79.5 214.0 78.9 215.0 78.2 216.0 77.6 217.0 77.0 218.0 76.4 219.0 75.8 220.0 75.1 221.0 74.5 222.0 74.0 223.0 73.4 224.0 72.8 225.0 72.2 226.0 71.6 227.0 71.1 228.0 70.5 229.0 70.0 230.0 69.4 231.0 68.9 232.0 68.4 233.0 67.9 234.0 67.4 235.0 66.9 236.0 66.4 237.0 65.9 238.0 65.5 239.0 65.0 240.0 64.6 241.0 64.1 242.0 63.7 243.0 63.3 244.0 62.9 245.0 62.5 246.0 62.1 247.0 61.7 248.0 61.3 249.0 61.0 250.0 60.6 251.0 60.3 252.0 59.9 253.0 59.6 254.0 59.3 255.0 59.0 256.0 58.7 257.0 58.4 258.0 58.1 259.0 57.9 260.0 57.6 261.0 57.4 262.0 57.1 263.0 56.9 264.0 56.7 265.0 56.5 266.0 56.2 267.0 56.0 268.0 55.9 269.0 55.7 270.0 55.5 271.0 55.3 272.0 55.2 273.0 55.0 274.0 54.9 275.0 54.7 276.0 54.6 277.0 54.4 278.0 54.3 279.0 54.2 280.0 54.1 281.0 54.0 282.0 53.9 283.0 53.8 284.0 53.7 285.0 53.6 286.0 53.5 287.0 53.4 288.0 53.3 289.0 53.2 290.0 53.2 291.0 53.1 292.0 53.0 293.0 53.0 294.0 52.9 295.0 52.8 296.0 52.8 297.0 52.7 298.0 52.7 299.0 52.6 300.0 52.6 301.0 52.5 302.0 52.5 303.0 52.5 304.0 52.4 305.0 52.4 306.0 52.4 307.0 52.3 308.0 52.3 309.0 52.3 310.0 52.2 311.0 52.2 312.0 52.2 313.0 52.2 314.0 52.1 315.0 52.1 316.0 52.1 317.0 52.1 318.0 52.1 319.0 52.0 320.0 52.0 321.0 52.0 322.0 52.0 323.0 52.0 324.0 52.0 325.0 51.9 326.0 51.9 327.0 51.9 328.0 51.9 329.0 51.9 330.0 51.9 331.0 51.9 332.0 51.9 333.0 51.9 334.0 51.9 335.0 51.8 336.0 51.8 337.0 51.8 338.0 51.8 339.0 51.8 340.0 51.8 341.0 51.8 342.0 51.8 343.0 51.8 344.0 51.8 345.0 51.8 346.0 51.8 347.0 51.8 348.0 51.8 349.0 51.8 350.0 51.8 351.0 51.8 352.0 51.8 353.0 51.8 354.0 51.8 355.0 51.8 356.0 51.7 357.0 51.7 358.0 51.7 359.0 51.7 360.0 51.7 361.0 51.7 362.0 51.7 363.0 51.7 364.0 51.7 365.0 51.7 366.0 51.7 367.0 51.7 368.0 51.7 369.0 51.7 370.0 51.7 371.0 51.7 372.0 51.7 373.0 51.7 374.0 51.7 375.0 51.7 376.0 51.7 377.0 51.7 378.0 51.7 379.0 51.7 380.0 51.7 381.0 51.7 382.0 51.7 383.0 51.7 384.0 51.7 385.0 51.7 386.0 51.7 387.0 51.7 388.0 51.7 389.0 51.7 390.0 51.7 391.0 51.7 392.0 51.7 393.0 51.7 394.0 51.7 395.0 51.7 396.0 51.7 397.0 51.7 398.0 51.7 399.0 51.7 400.0 51.7 401.0 51.7 402.0 51.7 403.0 51.7 404.0 51.7 405.0 51.7 406.0 51.7 407.0 51.7 408.0 51.7 409.0 51.7 410.0 51.7 411.0 51.7 412.0 51.7 413.0 51.7 414.0 51.7 415.0 51.7 416.0 51.7 417.0 51.7 418.0 51.7 419.0 51.7 420.0 51.7 421.0 51.7 422.0 51.7 423.0 51.7 424.0 51.7 425.0 51.7 426.0 51.7 427.0 51.7 428.0 51.7 429.0 51.7 430.0 51.7 431.0 51.7 432.0 51.7 433.0 51.7 434.0 51.7 435.0 51.7 436.0 51.7 437.0 51.7 438.0 51.7 439.0 51.7 440.0 51.7 441.0 51.7 442.0 51.7 443.0 51.7 444.0 51.7 445.0 51.7 446.0 51.7 447.0 51.7 448.0 51.7 449.0 51.7 450.0 51.7 451.0 51.7 452.0 51.7 453.0 51.7 454.0 51.7 455.0 51.7 456.0 51.7 457.0 51.7 458.0 51.7 459.0 51.7 460.0 51.7 461.0 51.7" fill="none" stroke="#ffff20" stroke-width="2" stroke-linejoin="round" shape-rendering="crispEdges"/></svg>
<i style="left:47px;top:342px;width:3px;height:1px;background:#ffffff;"></i>
<i style="left:512px;top:342px;width:3px;height:1px;background:#ffffff;"></i>
<b class="t" style="left:29.83px;top:336px;height:14px;line-height:14px;font-size:12px;color:#fff;">dB</b>
<i style="left:47px;top:362px;width:3px;height:1px;background:#ffffff;"></i>
<i style="left:512px;top:362px;width:3px;height:1px;background:#ffffff;"></i>
<b class="t" style="left:37.83px;top:356px;height:14px;line-height:14px;font-size:12px;color:#fff;">6</b>
<i style="left:47px;top:382px;width:3px;height:1px;background:#ffffff;"></i>
<i style="left:512px;top:382px;width:3px;height:1px;background:#ffffff;"></i>
<b class="t" style="left:37.83px;top:376px;height:14px;line-height:14px;font-size:12px;color:#fff;">0</b>
<i style="left:47px;top:402px;width:3px;height:1px;background:#ffffff;"></i>
<i style="left:512px;top:402px;width:3px;height:1px;background:#ffffff;"></i>
<b class="t" style="left:32.63px;top:396px;height:14px;line-height:14px;font-size:12px;color:#fff;"><span style="display:inline-block;transform:scaleX(1.4);margin:0 1.1px 0 0.1px">-</span>6</b>
<i style="left:47px;top:422px;width:3px;height:1px;background:#ffffff;"></i>
<i style="left:512px;top:422px;width:3px;height:1px;background:#ffffff;"></i>
<b class="t" style="left:25.96px;top:416px;height:14px;line-height:14px;font-size:12px;color:#fff;"><span style="display:inline-block;transform:scaleX(1.4);margin:0 1.1px 0 0.1px">-</span>12</b>
<i style="left:47px;top:442px;width:3px;height:1px;background:#ffffff;"></i>
<i style="left:512px;top:442px;width:3px;height:1px;background:#ffffff;"></i>
<b class="t" style="left:25.96px;top:436px;height:14px;line-height:14px;font-size:12px;color:#fff;"><span style="display:inline-block;transform:scaleX(1.4);margin:0 1.1px 0 0.1px">-</span>18</b>
<i style="left:47px;top:462px;width:3px;height:1px;background:#ffffff;"></i>
<i style="left:512px;top:462px;width:3px;height:1px;background:#ffffff;"></i>
<b class="t" style="left:25.96px;top:456px;height:14px;line-height:14px;font-size:12px;color:#fff;"><span style="display:inline-block;transform:scaleX(1.4);margin:0 1.1px 0 0.1px">-</span>24</b>
<i style="left:47px;top:482px;width:3px;height:1px;background:#ffffff;"></i>
<i style="left:512px;top:482px;width:3px;height:1px;background:#ffffff;"></i>
<b class="t" style="left:25.96px;top:476px;height:14px;line-height:14px;font-size:12px;color:#fff;"><span style="display:inline-block;transform:scaleX(1.4);margin:0 1.1px 0 0.1px">-</span>30</b>
<i style="left:47px;top:502px;width:3px;height:1px;background:#ffffff;"></i>
<i style="left:512px;top:502px;width:3px;height:1px;background:#ffffff;"></i>
<b class="t" style="left:25.96px;top:496px;height:14px;line-height:14px;font-size:12px;color:#fff;"><span style="display:inline-block;transform:scaleX(1.4);margin:0 1.1px 0 0.1px">-</span>36</b>
<i style="left:51px;top:514px;width:1px;height:3px;background:#ffffff;"></i>
<i style="left:65px;top:514px;width:1px;height:3px;background:#ffffff;"></i>
<i style="left:77px;top:514px;width:1px;height:3px;background:#ffffff;"></i>
<i style="left:87px;top:514px;width:1px;height:3px;background:#ffffff;"></i>
<i style="left:96px;top:514px;width:1px;height:3px;background:#ffffff;"></i>
<i style="left:104px;top:514px;width:1px;height:3px;background:#ffffff;"></i>
<i style="left:157px;top:514px;width:1px;height:3px;background:#ffffff;"></i>
<i style="left:189px;top:514px;width:1px;height:3px;background:#ffffff;"></i>
<i style="left:211px;top:514px;width:1px;height:3px;background:#ffffff;"></i>
<i style="left:228px;top:514px;width:1px;height:3px;background:#ffffff;"></i>
<i style="left:242px;top:514px;width:1px;height:3px;background:#ffffff;"></i>
<i style="left:254px;top:514px;width:1px;height:3px;background:#ffffff;"></i>
<i style="left:264px;top:514px;width:1px;height:3px;background:#ffffff;"></i>
<i style="left:273px;top:514px;width:1px;height:3px;background:#ffffff;"></i>
<i style="left:281px;top:514px;width:1px;height:3px;background:#ffffff;"></i>
<i style="left:334px;top:514px;width:1px;height:3px;background:#ffffff;"></i>
<i style="left:365px;top:514px;width:1px;height:3px;background:#ffffff;"></i>
<i style="left:387px;top:514px;width:1px;height:3px;background:#ffffff;"></i>
<i style="left:405px;top:514px;width:1px;height:3px;background:#ffffff;"></i>
<i style="left:419px;top:514px;width:1px;height:3px;background:#ffffff;"></i>
<i style="left:430px;top:514px;width:1px;height:3px;background:#ffffff;"></i>
<i style="left:441px;top:514px;width:1px;height:3px;background:#ffffff;"></i>
<i style="left:450px;top:514px;width:1px;height:3px;background:#ffffff;"></i>
<i style="left:458px;top:514px;width:1px;height:3px;background:#ffffff;"></i>
<i style="left:511px;top:514px;width:1px;height:3px;background:#ffffff;"></i>
<b class="t" style="left:48.30px;top:519px;height:14px;line-height:14px;font-size:12px;color:#fff;letter-spacing:-0.224px;">5 Hz</b>
<b class="t" style="left:97.85px;top:519px;height:14px;line-height:14px;font-size:12px;color:#fff;">10</b>
<b class="t" style="left:222.33px;top:519px;height:14px;line-height:14px;font-size:12px;color:#fff;">50</b>
<b class="t" style="left:270.71px;top:519px;height:14px;line-height:14px;font-size:12px;color:#fff;">100</b>
<b class="t" style="left:394.39px;top:519px;height:14px;line-height:14px;font-size:12px;color:#fff;">500</b>
<b class="t" style="left:442.68px;top:519px;height:14px;line-height:14px;font-size:12px;color:#fff;">1000</b>
<b class="t" style="left:487.11px;top:519px;height:14px;line-height:14px;font-size:12px;color:#fff;">2000</b>
<i style="left:521px;top:299px;width:502px;height:238px;background:#000000;"></i>
<i style="left:522px;top:300px;width:499px;height:235px;background:#cacaca;"></i>
<i style="left:524px;top:302px;width:497px;height:233px;background:#808080;"></i>
<i style="left:528px;top:307px;width:38px;height:16px;background:#000000;"></i>
<i style="left:529px;top:308px;width:36px;height:14px;background:#d4d0c8;"></i>
<i style="left:529px;top:308px;width:36px;height:1px;background:#ffffff;"></i>
<i style="left:529px;top:308px;width:1px;height:14px;background:#ffffff;"></i>
<i style="left:529px;top:321px;width:36px;height:1px;background:#404040;"></i>
<i style="left:564px;top:308px;width:1px;height:14px;background:#404040;"></i>
<i style="left:530px;top:320px;width:34px;height:1px;background:#808080;"></i>
<i style="left:563px;top:309px;width:1px;height:12px;background:#808080;"></i>
<b class="t" style="left:533.60px;top:308px;height:12px;line-height:12px;font-size:11px;color:#000;letter-spacing:-0.270px;">Clear</b>
<i style="left:569px;top:307px;width:43px;height:16px;background:#d4d0c8;"></i>
<i style="left:569px;top:307px;width:43px;height:1px;background:#ffffff;"></i>
<i style="left:569px;top:307px;width:1px;height:16px;background:#ffffff;"></i>
<i style="left:569px;top:322px;width:43px;height:1px;background:#404040;"></i>
<i style="left:611px;top:307px;width:1px;height:16px;background:#404040;"></i>
<i style="left:570px;top:321px;width:41px;height:1px;background:#808080;"></i>
<i style="left:610px;top:308px;width:1px;height:14px;background:#808080;"></i>
<b class="t" style="left:572.85px;top:308px;height:12px;line-height:12px;font-size:11px;color:#000;letter-spacing:0.140px;">Cursor</b>
<b class="t" style="left:686.08px;top:311px;height:14px;line-height:14px;font-size:12px;color:#000;font-weight:bold;letter-spacing:-0.110px;">Phase Response (Degrees/Hz)</b>
<b class="t" style="left:685.08px;top:310px;height:14px;line-height:14px;font-size:12px;color:#fff;font-weight:bold;letter-spacing:-0.110px;">Phase Response (Degrees/Hz)</b>
<i style="left:554px;top:331px;width:462px;height:183px;background:#d0d0d0;"></i>
<i style="left:556px;top:333px;width:458px;height:179px;background:#000000;"></i>
<svg style="left:554px;top:331px" width="462" height="183" viewBox="0 0 462 183"><path d="M15.5 0V181M27.5 0V181M37.5 0V181M46.5 0V181M54.5 0V181M107.5 0V181M139.5 0V181M161.5 0V181M178.5 0V181M192.5 0V181M204.5 0V181M214.5 0V181M223.5 0V181M231.5 0V181M284.5 0V181M315.5 0V181M337.5 0V181M355.5 0V181M369.5 0V181M380.5 0V181M391.5 0V181M400.5 0V181M408.5 0V181M0 11.5H460M0 21.5H460M0 31.5H460M0 41.5H460M0 51.5H460M0 61.5H460M0 71.5H460M0 81.5H460M0 91.5H460M0 101.5H460M0 111.5H460M0 121.5H460M0 131.5H460M0 141.5H460M0 151.5H460M0 161.5H460M0 171.5H460" stroke="#808080" fill="none" shape-rendering="crispEdges"/><polyline points="1.0 92.7 2.0 92.7 3.0 92.7 4.0 92.7 5.0 92.7 6.0 92.7 7.0 92.7 8.0 92.8 9.0 92.8 10.0 92.8 11.0 92.8 12.0 92.8 13.0 92.8 14.0 92.8 15.0 92.9 16.0 92.9 17.0 92.9 18.0 92.9 19.0 92.9 20.0 92.9 21.0 92.9 22.0 93.0 23.0 93.0 24.0 93.0 25.0 93.0 26.0 93.0 27.0 93.1 28.0 93.1 29.0 93.1 30.0 93.1 31.0 93.1 32.0 93.1 33.0 93.2 34.0 93.2 35.0 93.2 36.0 93.2 37.0 93.2 38.0 93.3 39.0 93.3 40.0 93.3 41.0 93.3 42.0 93.3 43.0 93.4 44.0 93.4 45.0 93.4 46.0 93.4 47.0 93.5 48.0 93.5 49.0 93.5 50.0 93.5 51.0 93.5 52.0 93.6 53.0 93.6 54.0 93.6 55.0 93.6 56.0 93.7 57.0 93.7 58.0 93.7 59.0 93.8 60.0 93.8 61.0 93.8 62.0 93.8 63.0 93.9 64.0 93.9 65.0 93.9 66.0 94.0 67.0 94.0 68.0 94.0 69.0 94.0 70.0 94.1 71.0 94.1 72.0 94.1 73.0 94.2 74.0 94.2 75.0 94.2 76.0 94.3 77.0 94.3 78.0 94.3 79.0 94.4 80.0 94.4 81.0 94.4 82.0 94.5 83.0 94.5 84.0 94.6 85.0 94.6 86.0 94.6 87.0 94.7 88.0 94.7 89.0 94.7 90.0 94.8 91.0 94.8 92.0 94.9 93.0 94.9 94.0 95.0 95.0 95.0 96.0 95.0 97.0 95.1 98.0 95.1 99.0 95.2 100.0 95.2 101.0 95.3 102.0 95.3 103.0 95.4 104.0 95.4 105.0 95.5 106.0 95.5 107.0 95.6 108.0 95.6 109.0 95.7 110.0 95.7 111.0 95.8 112.0 95.8 113.0 95.9 114.0 95.9 115.0 96.0 116.0 96.1 117.0 96.1 118.0 96.2 119.0 96.2 120.0 96.3 121.0 96.4 122.0 96.4 123.0 96.5 124.0 96.5 125.0 96.6 126.0 96.7 127.0 96.7 128.0 96.8 129.0 96.9 130.0 96.9 131.0 97.0 132.0 97.1 133.0 97.2 134.0 97.2 135.0 97.3 136.0 97.4 137.0 97.5 138.0 97.5 139.0 97.6 140.0 97.7 141.0 97.8 142.0 97.9 143.0 98.0 144.0 98.0 145.0 98.1 146.0 98.2 147.0 98.3 148.0 98.4 149.0 98.5 150.0 98.6 151.0 98.7 152.0 98.8 153.0 98.9 154.0 99.0 155.0 99.1 156.0 99.2 157.0 99.3 158.0 99.4 159.0 99.5 160.0 99.6 161.0 99.7 162.0 99.8 163.0 99.9 164.0 100.1 165.0 100.2 166.0 100.3 167.0 100.4 168.0 100.5 169.0 100.7 170.0 100.8 171.0 100.9 172.0 101.1 173.0 101.2 174.0 101.3 175.0 101.5 176.0 101.6 177.0 101.8 178.0 101.9 179.0 102.1 180.0 102.2 181.0 102.4 182.0 102.5 183.0 102.7 184.0 102.8 185.0 103.0 186.0 103.2 187.0 103.3 188.0 103.5 189.0 103.7 190.0 103.9 191.0 104.1 192.0 104.2 193.0 104.4 194.0 104.6 195.0 104.8 196.0 105.0 197.0 105.2 198.0 105.4 199.0 105.7 200.0 105.9 201.0 106.1 202.0 106.3 203.0 106.5 204.0 106.8 205.0 107.0 206.0 107.3 207.0 107.5 208.0 107.8 209.0 108.0 210.0 108.3 211.0 108.6 212.0 108.8 213.0 109.1 214.0 109.4 215.0 109.7 216.0 110.0 217.0 110.3 218.0 110.6 219.0 110.9 220.0 111.2 221.0 111.6 222.0 111.9 223.0 112.3 224.0 112.6 225.0 113.0 226.0 113.3 227.0 113.7 228.0 114.1 229.0 114.5 230.0 114.9 231.0 115.3 232.0 115.7 233.0 116.1 234.0 116.6 235.0 117.0 236.0 117.5 237.0 117.9 238.0 118.4 239.0 118.9 240.0 119.4 241.0 119.9 242.0 120.4 243.0 120.9 244.0 121.4 245.0 121.9 246.0 122.5 247.0 123.0 248.0 123.6 249.0 124.2 250.0 124.8 251.0 125.4 252.0 126.0 253.0 126.6 254.0 127.2 255.0 127.8 256.0 128.4 257.0 129.1 258.0 129.7 259.0 130.4 260.0 131.0 261.0 131.7 262.0 132.4 263.0 133.0 264.0 133.7 265.0 134.4 266.0 135.1 267.0 135.7 268.0 136.4 269.0 137.1 270.0 137.8 271.0 138.5 272.0 139.2 273.0 139.8 274.0 140.5 275.0 141.2 276.0 141.8 277.0 142.5 278.0 143.2 279.0 143.8 280.0 144.5 281.0 145.1 282.0 145.7 283.0 146.3 284.0 147.0 285.0 147.6 286.0 148.2 287.0 148.8 288.0 149.3 289.0 149.9 290.0 150.5 291.0 151.0 292.0 151.6 293.0 152.1 294.0 152.6 295.0 153.1 296.0 153.7 297.0 154.2 298.0 154.6 299.0 155.1 300.0 155.6 301.0 156.0 302.0 156.5 303.0 156.9 304.0 157.4 305.0 157.8 306.0 158.2 307.0 158.6 308.0 159.0 309.0 159.4 310.0 159.8 311.0 160.1 312.0 160.5 313.0 160.9 314.0 161.2 315.0 161.6 316.0 161.9 317.0 162.2 318.0 162.5 319.0 162.9 320.0 163.2 321.0 163.5 322.0 163.8 323.0 164.1 324.0 164.3 325.0 164.6 326.0 164.9 327.0 165.2 328.0 165.4 329.0 165.7 330.0 165.9 331.0 166.2 332.0 166.4 333.0 166.7 334.0 166.9 335.0 167.1 336.0 167.4 337.0 167.6 338.0 167.8 339.0 168.0 340.0 168.2 341.0 168.4 342.0 168.6 343.0 168.8 344.0 169.0 345.0 169.2 346.0 169.4 347.0 169.6 348.0 169.7 349.0 169.9 350.0 170.1 351.0 170.3 352.0 170.4 353.0 170.6 354.0 170.8 355.0 170.9 356.0 171.1 357.0 171.2 358.0 171.4 359.0 171.5 360.0 171.7 361.0 171.8 362.0 172.0 363.0 172.1 364.0 172.2 365.0 172.4 366.0 172.5 367.0 172.6 368.0 172.8 369.0 172.9 370.0 173.0 371.0 173.1 372.0 173.2 373.0 173.4 374.0 173.5 375.0 173.6 376.0 173.7 377.0 173.8 378.0 173.9 379.0 174.0 380.0 174.1 381.0 174.2 382.0 174.3 383.0 174.4 384.0 174.5 385.0 174.6 386.0 174.7 387.0 174.8 388.0 174.9 389.0 175.0 390.0 175.1 391.0 175.2 392.0 175.3 393.0 175.4 394.0 175.5 395.0 175.5 396.0 175.6 397.0 175.7 398.0 175.8 399.0 175.9 400.0 175.9 401.0 176.0 402.0 176.1 403.0 176.2 404.0 176.3 405.0 176.3 406.0 176.4 407.0 176.5 408.0 176.5 409.0 176.6 410.0 176.7 411.0 176.7 412.0 176.8 413.0 176.9 414.0 176.9 415.0 177.0 416.0 177.1 417.0 177.1 418.0 177.2 419.0 177.2 420.0 177.3 421.0 177.4 422.0 177.4 423.0 177.5 424.0 177.5 425.0 177.6 426.0 177.6 427.0 177.7 428.0 177.7 429.0 177.8 430.0 177.8 431.0 177.9 432.0 178.0 433.0 178.0 434.0 178.0 435.0 178.1 436.0 178.1 437.0 178.2 438.0 178.2 439.0 178.3 440.0 178.3 441.0 178.4 442.0 178.4 443.0 178.5 444.0 178.5 445.0 178.5 446.0 178.6 447.0 178.6 448.0 178.7 449.0 178.7 450.0 178.7 451.0 178.8 452.0 178.8 453.0 178.9 454.0 178.9 455.0 178.9 456.0 179.0 457.0 179.0 458.0 179.0 459.0 179.1 460.0 179.1 461.0 179.1" fill="none" stroke="#e020e0" stroke-width="2" stroke-linejoin="round" shape-rendering="crispEdges"/><polyline points="1.0 93.3 2.0 93.4 3.0 93.4 4.0 93.4 5.0 93.4 6.0 93.5 7.0 93.5 8.0 93.5 9.0 93.5 10.0 93.6 11.0 93.6 12.0 93.6 13.0 93.6 14.0 93.7 15.0 93.7 16.0 93.7 17.0 93.7 18.0 93.8 19.0 93.8 20.0 93.8 21.0 93.8 22.0 93.9 23.0 93.9 24.0 93.9 25.0 94.0 26.0 94.0 27.0 94.0 28.0 94.0 29.0 94.1 30.0 94.1 31.0 94.1 32.0 94.2 33.0 94.2 34.0 94.2 35.0 94.3 36.0 94.3 37.0 94.3 38.0 94.4 39.0 94.4 40.0 94.4 41.0 94.5 42.0 94.5 43.0 94.6 44.0 94.6 45.0 94.6 46.0 94.7 47.0 94.7 48.0 94.7 49.0 94.8 50.0 94.8 51.0 94.9 52.0 94.9 53.0 95.0 54.0 95.0 55.0 95.0 56.0 95.1 57.0 95.1 58.0 95.2 59.0 95.2 60.0 95.3 61.0 95.3 62.0 95.4 63.0 95.4 64.0 95.5 65.0 95.5 66.0 95.6 67.0 95.6 68.0 95.7 69.0 95.7 70.0 95.8 71.0 95.8 72.0 95.9 73.0 95.9 74.0 96.0 75.0 96.0 76.0 96.1 77.0 96.2 78.0 96.2 79.0 96.3 80.0 96.3 81.0 96.4 82.0 96.5 83.0 96.5 84.0 96.6 85.0 96.6 86.0 96.7 87.0 96.8 88.0 96.8 89.0 96.9 90.0 97.0 91.0 97.1 92.0 97.1 93.0 97.2 94.0 97.3 95.0 97.3 96.0 97.4 97.0 97.5 98.0 97.6 99.0 97.6 100.0 97.7 101.0 97.8 102.0 97.9 103.0 98.0 104.0 98.1 105.0 98.1 106.0 98.2 107.0 98.3 108.0 98.4 109.0 98.5 110.0 98.6 111.0 98.7 112.0 98.8 113.0 98.9 114.0 99.0 115.0 99.1 116.0 99.2 117.0 99.3 118.0 99.4 119.0 99.5 120.0 99.6 121.0 99.7 122.0 99.8 123.0 99.9 124.0 100.0 125.0 100.1 126.0 100.2 127.0 100.3 128.0 100.4 129.0 100.6 130.0 100.7 131.0 100.8 132.0 100.9 133.0 101.1 134.0 101.2 135.0 101.3 136.0 101.4 137.0 101.6 138.0 101.7 139.0 101.8 140.0 102.0 141.0 102.1 142.0 102.3 143.0 102.4 144.0 102.5 145.0 102.7 146.0 102.8 147.0 103.0 148.0 103.2 149.0 103.3 150.0 103.5 151.0 103.6 152.0 103.8 153.0 104.0 154.0 104.1 155.0 104.3 156.0 104.5 157.0 104.7 158.0 104.8 159.0 105.0 160.0 105.2 161.0 105.4 162.0 105.6 163.0 105.8 164.0 106.0 165.0 106.2 166.0 106.4 167.0 106.6 168.0 106.8 169.0 107.0 170.0 107.2 171.0 107.4 172.0 107.6 173.0 107.9 174.0 108.1 175.0 108.3 176.0 108.6 177.0 108.8 178.0 109.0 179.0 109.3 180.0 109.5 181.0 109.8 182.0 110.1 183.0 110.3 184.0 110.6 185.0 110.8 186.0 111.1 187.0 111.4 188.0 111.7 189.0 112.0 190.0 112.3 191.0 112.6 192.0 112.9 193.0 113.2 194.0 113.5 195.0 113.8 196.0 114.1 197.0 114.4 198.0 114.8 199.0 115.1 200.0 115.4 201.0 115.8 202.0 116.1 203.0 116.5 204.0 116.8 205.0 117.2 206.0 117.6 207.0 117.9 208.0 118.3 209.0 118.7 210.0 119.1 211.0 119.5 212.0 119.9 213.0 120.3 214.0 120.7 215.0 121.1 216.0 121.6 217.0 122.0 218.0 122.4 219.0 122.9 220.0 123.3 221.0 123.8 222.0 124.2 223.0 124.7 224.0 125.1 225.0 125.6 226.0 126.1 227.0 126.6 228.0 127.0 229.0 127.5 230.0 128.0 231.0 128.5 232.0 129.0 233.0 129.5 234.0 130.0 235.0 130.5 236.0 131.0 237.0 131.5 238.0 132.1 239.0 132.6 240.0 133.1 241.0 133.6 242.0 134.1 243.0 134.7 244.0 135.2 245.0 135.7 246.0 136.2 247.0 136.8 248.0 137.3 249.0 137.8 250.0 138.4 251.0 138.9 252.0 139.4 253.0 139.9 254.0 140.5 255.0 141.0 256.0 141.5 257.0 142.0 258.0 142.5 259.0 143.0 260.0 143.5 261.0 144.0 262.0 144.5 263.0 145.0 264.0 145.5 265.0 146.0 266.0 146.5 267.0 147.0 268.0 147.5 269.0 147.9 270.0 148.4 271.0 148.9 272.0 149.3 273.0 149.8 274.0 150.2 275.0 150.7 276.0 151.1 277.0 151.5 278.0 152.0 279.0 152.4 280.0 152.8 281.0 153.2 282.0 153.6 283.0 154.0 284.0 154.4 285.0 154.8 286.0 155.2 287.0 155.6 288.0 155.9 289.0 156.3 290.0 156.7 291.0 157.0 292.0 157.4 293.0 157.7 294.0 158.1 295.0 158.4 296.0 158.7 297.0 159.1 298.0 159.4 299.0 159.7 300.0 160.0 301.0 160.3 302.0 160.6 303.0 160.9 304.0 161.2 305.0 161.5 306.0 161.8 307.0 162.1 308.0 162.4 309.0 162.6 310.0 162.9 311.0 163.2 312.0 163.4 313.0 163.7 314.0 163.9 315.0 164.2 316.0 164.4 317.0 164.7 318.0 164.9 319.0 165.1 320.0 165.4 321.0 165.6 322.0 165.8 323.0 166.0 324.0 166.3 325.0 166.5 326.0 166.7 327.0 166.9 328.0 167.1 329.0 167.3 330.0 167.5 331.0 167.7 332.0 167.9 333.0 168.1 334.0 168.3 335.0 168.4 336.0 168.6 337.0 168.8 338.0 169.0 339.0 169.1 340.0 169.3 341.0 169.5 342.0 169.7 343.0 169.8 344.0 170.0 345.0 170.1 346.0 170.3 347.0 170.4 348.0 170.6 349.0 170.7 350.0 170.9 351.0 171.0 352.0 171.2 353.0 171.3 354.0 171.5 355.0 171.6 356.0 171.7 357.0 171.9 358.0 172.0 359.0 172.1 360.0 172.3 361.0 172.4 362.0 172.5 363.0 172.6 364.0 172.8 365.0 172.9 366.0 173.0 367.0 173.1 368.0 173.2 369.0 173.3 370.0 173.4 371.0 173.6 372.0 173.7 373.0 173.8 374.0 173.9 375.0 174.0 376.0 174.1 377.0 174.2 378.0 174.3 379.0 174.4 380.0 174.5 381.0 174.6 382.0 174.7 383.0 174.8 384.0 174.8 385.0 174.9 386.0 175.0 387.0 175.1 388.0 175.2 389.0 175.3 390.0 175.4 391.0 175.5 392.0 175.5 393.0 175.6 394.0 175.7 395.0 175.8 396.0 175.9 397.0 175.9 398.0 176.0 399.0 176.1 400.0 176.2 401.0 176.2 402.0 176.3 403.0 176.4 404.0 176.4 405.0 176.5 406.0 176.6 407.0 176.6 408.0 176.7 409.0 176.8 410.0 176.8 411.0 176.9 412.0 177.0 413.0 177.0 414.0 177.1 415.0 177.1 416.0 177.2 417.0 177.3 418.0 177.3 419.0 177.4 420.0 177.4 421.0 177.5 422.0 177.5 423.0 177.6 424.0 177.7 425.0 177.7 426.0 177.8 427.0 177.8 428.0 177.9 429.0 177.9 430.0 178.0 431.0 178.0 432.0 178.1 433.0 178.1 434.0 178.1 435.0 178.2 436.0 178.2 437.0 178.3 438.0 178.3 439.0 178.4 440.0 178.4 441.0 178.5 442.0 178.5 443.0 178.5 444.0 178.6 445.0 178.6 446.0 178.7 447.0 178.7 448.0 178.7 449.0 178.8 450.0 178.8 451.0 178.9 452.0 178.9 453.0 178.9 454.0 179.0 455.0 179.0 456.0 179.0 457.0 179.1 458.0 179.1 459.0 179.1 460.0 179.2 461.0 179.2" fill="none" stroke="#ffff20" stroke-width="2" stroke-linejoin="round" shape-rendering="crispEdges"/></svg>
<i style="left:551px;top:332px;width:3px;height:1px;background:#ffffff;"></i>
<i style="left:1016px;top:332px;width:3px;height:1px;background:#ffffff;"></i>
<b class="t" style="left:529.22px;top:326px;height:12px;line-height:12px;font-size:11px;color:#fff;">360<span style="font-size:9px;position:relative;top:-1.5px">&deg;</span></b>
<i style="left:551px;top:352px;width:3px;height:1px;background:#ffffff;"></i>
<i style="left:1016px;top:352px;width:3px;height:1px;background:#ffffff;"></i>
<b class="t" style="left:529.22px;top:346px;height:12px;line-height:12px;font-size:11px;color:#fff;">320<span style="font-size:9px;position:relative;top:-1.5px">&deg;</span></b>
<i style="left:551px;top:372px;width:3px;height:1px;background:#ffffff;"></i>
<i style="left:1016px;top:372px;width:3px;height:1px;background:#ffffff;"></i>
<b class="t" style="left:529.22px;top:366px;height:12px;line-height:12px;font-size:11px;color:#fff;">280<span style="font-size:9px;position:relative;top:-1.5px">&deg;</span></b>
<i style="left:551px;top:392px;width:3px;height:1px;background:#ffffff;"></i>
<i style="left:1016px;top:392px;width:3px;height:1px;background:#ffffff;"></i>
<b class="t" style="left:529.22px;top:386px;height:12px;line-height:12px;font-size:11px;color:#fff;">240<span style="font-size:9px;position:relative;top:-1.5px">&deg;</span></b>
<i style="left:551px;top:412px;width:3px;height:1px;background:#ffffff;"></i>
<i style="left:1016px;top:412px;width:3px;height:1px;background:#ffffff;"></i>
<b class="t" style="left:529.22px;top:406px;height:12px;line-height:12px;font-size:11px;color:#fff;">200<span style="font-size:9px;position:relative;top:-1.5px">&deg;</span></b>
<i style="left:551px;top:432px;width:3px;height:1px;background:#ffffff;"></i>
<i style="left:1016px;top:432px;width:3px;height:1px;background:#ffffff;"></i>
<b class="t" style="left:529.22px;top:426px;height:12px;line-height:12px;font-size:11px;color:#fff;">160<span style="font-size:9px;position:relative;top:-1.5px">&deg;</span></b>
<i style="left:551px;top:452px;width:3px;height:1px;background:#ffffff;"></i>
<i style="left:1016px;top:452px;width:3px;height:1px;background:#ffffff;"></i>
<b class="t" style="left:529.22px;top:446px;height:12px;line-height:12px;font-size:11px;color:#fff;">120<span style="font-size:9px;position:relative;top:-1.5px">&deg;</span></b>
<i style="left:551px;top:472px;width:3px;height:1px;background:#ffffff;"></i>
<i style="left:1016px;top:472px;width:3px;height:1px;background:#ffffff;"></i>
<b class="t" style="left:535.34px;top:466px;height:12px;line-height:12px;font-size:11px;color:#fff;">80<span style="font-size:9px;position:relative;top:-1.5px">&deg;</span></b>
<i style="left:551px;top:492px;width:3px;height:1px;background:#ffffff;"></i>
<i style="left:1016px;top:492px;width:3px;height:1px;background:#ffffff;"></i>
<b class="t" style="left:535.34px;top:486px;height:12px;line-height:12px;font-size:11px;color:#fff;">40<span style="font-size:9px;position:relative;top:-1.5px">&deg;</span></b>
<i style="left:551px;top:512px;width:3px;height:1px;background:#ffffff;"></i>
<i style="left:1016px;top:512px;width:3px;height:1px;background:#ffffff;"></i>
<b class="t" style="left:541.47px;top:506px;height:12px;line-height:12px;font-size:11px;color:#fff;">0<span style="font-size:9px;position:relative;top:-1.5px">&deg;</span></b>
<i style="left:555px;top:514px;width:1px;height:3px;background:#ffffff;"></i>
<i style="left:569px;top:514px;width:1px;height:3px;background:#ffffff;"></i>
<i style="left:581px;top:514px;width:1px;height:3px;background:#ffffff;"></i>
<i style="left:591px;top:514px;width:1px;height:3px;background:#ffffff;"></i>
<i style="left:600px;top:514px;width:1px;height:3px;background:#ffffff;"></i>
<i style="left:608px;top:514px;width:1px;height:3px;background:#ffffff;"></i>
<i style="left:661px;top:514px;width:1px;height:3px;background:#ffffff;"></i>
<i style="left:693px;top:514px;width:1px;height:3px;background:#ffffff;"></i>
<i style="left:715px;top:514px;width:1px;height:3px;background:#ffffff;"></i>
<i style="left:732px;top:514px;width:1px;height:3px;background:#ffffff;"></i>
<i style="left:746px;top:514px;width:1px;height:3px;background:#ffffff;"></i>
<i style="left:758px;top:514px;width:1px;height:3px;background:#ffffff;"></i>
<i style="left:768px;top:514px;width:1px;height:3px;background:#ffffff;"></i>
<i style="left:777px;top:514px;width:1px;height:3px;background:#ffffff;"></i>
<i style="left:785px;top:514px;width:1px;height:3px;background:#ffffff;"></i>
<i style="left:838px;top:514px;width:1px;height:3px;background:#ffffff;"></i>
<i style="left:869px;top:514px;width:1px;height:3px;background:#ffffff;"></i>
<i style="left:891px;top:514px;width:1px;height:3px;background:#ffffff;"></i>
<i style="left:909px;top:514px;width:1px;height:3px;background:#ffffff;"></i>
<i style="left:923px;top:514px;width:1px;height:3px;background:#ffffff;"></i>
<i style="left:934px;top:514px;width:1px;height:3px;background:#ffffff;"></i>
<i style="left:945px;top:514px;width:1px;height:3px;background:#ffffff;"></i>
<i style="left:954px;top:514px;width:1px;height:3px;background:#ffffff;"></i>
<i style="left:962px;top:514px;width:1px;height:3px;background:#ffffff;"></i>
<i style="left:1015px;top:514px;width:1px;height:3px;background:#ffffff;"></i>
<b class="t" style="left:552.30px;top:519px;height:14px;line-height:14px;font-size:12px;color:#fff;letter-spacing:-0.224px;">5 Hz</b>
<b class="t" style="left:601.85px;top:519px;height:14px;line-height:14px;font-size:12px;color:#fff;">10</b>
<b class="t" style="left:726.33px;top:519px;height:14px;line-height:14px;font-size:12px;color:#fff;">50</b>
<b class="t" style="left:774.71px;top:519px;height:14px;line-height:14px;font-size:12px;color:#fff;">100</b>
<b class="t" style="left:898.39px;top:519px;height:14px;line-height:14px;font-size:12px;color:#fff;">500</b>
<b class="t" style="left:946.68px;top:519px;height:14px;line-height:14px;font-size:12px;color:#fff;">1000</b>
<b class="t" style="left:991.11px;top:519px;height:14px;line-height:14px;font-size:12px;color:#fff;">2000</b>
<i style="left:17px;top:538px;width:502px;height:238px;background:#000000;"></i>
<i style="left:18px;top:539px;width:499px;height:235px;background:#cacaca;"></i>
<i style="left:20px;top:541px;width:497px;height:233px;background:#808080;"></i>
<i style="left:24px;top:546px;width:38px;height:16px;background:#d4d0c8;"></i>
<i style="left:24px;top:546px;width:38px;height:1px;background:#ffffff;"></i>
<i style="left:24px;top:546px;width:1px;height:16px;background:#ffffff;"></i>
<i style="left:24px;top:561px;width:38px;height:1px;background:#404040;"></i>
<i style="left:61px;top:546px;width:1px;height:16px;background:#404040;"></i>
<i style="left:25px;top:560px;width:36px;height:1px;background:#808080;"></i>
<i style="left:60px;top:547px;width:1px;height:14px;background:#808080;"></i>
<b class="t" style="left:29.60px;top:547px;height:12px;line-height:12px;font-size:11px;color:#000;letter-spacing:-0.270px;">Clear</b>
<i style="left:65px;top:546px;width:43px;height:16px;background:#d4d0c8;"></i>
<i style="left:65px;top:546px;width:43px;height:1px;background:#ffffff;"></i>
<i style="left:65px;top:546px;width:1px;height:16px;background:#ffffff;"></i>
<i style="left:65px;top:561px;width:43px;height:1px;background:#404040;"></i>
<i style="left:107px;top:546px;width:1px;height:16px;background:#404040;"></i>
<i style="left:66px;top:560px;width:41px;height:1px;background:#808080;"></i>
<i style="left:106px;top:547px;width:1px;height:14px;background:#808080;"></i>
<b class="t" style="left:68.85px;top:547px;height:12px;line-height:12px;font-size:11px;color:#000;letter-spacing:0.140px;">Cursor</b>
<b class="t" style="left:133.72px;top:550px;height:14px;line-height:14px;font-size:12px;color:#000;font-weight:bold;letter-spacing:-0.110px;">Amplitude Response w/ 2.83V Input (dBSPL/Hz)</b>
<b class="t" style="left:132.72px;top:549px;height:14px;line-height:14px;font-size:12px;color:#fff;font-weight:bold;letter-spacing:-0.110px;">Amplitude Response w/ 2.83V Input (dBSPL/Hz)</b>
<i style="left:498px;top:549px;width:13px;height:13px;background:#ffffff;"></i>
<i style="left:498px;top:549px;width:13px;height:1px;background:#808080;"></i>
<i style="left:498px;top:549px;width:1px;height:13px;background:#808080;"></i>
<i style="left:499px;top:550px;width:11px;height:1px;background:#000000;"></i>
<i style="left:499px;top:550px;width:1px;height:11px;background:#000000;"></i>
<i style="left:498px;top:561px;width:13px;height:1px;background:#ffffff;"></i>
<i style="left:510px;top:549px;width:1px;height:13px;background:#ffffff;"></i>
<i style="left:499px;top:560px;width:11px;height:1px;background:#d4d0c8;"></i>
<i style="left:509px;top:550px;width:1px;height:11px;background:#d4d0c8;"></i>
<i style="left:50px;top:570px;width:462px;height:183px;background:#d0d0d0;"></i>
<i style="left:52px;top:572px;width:458px;height:179px;background:#000000;"></i>
<svg style="left:50px;top:570px" width="462" height="183" viewBox="0 0 462 183"><path d="M15.5 0V181M27.5 0V181M37.5 0V181M46.5 0V181M54.5 0V181M107.5 0V181M139.5 0V181M161.5 0V181M178.5 0V181M192.5 0V181M204.5 0V181M214.5 0V181M223.5 0V181M231.5 0V181M284.5 0V181M315.5 0V181M337.5 0V181M355.5 0V181M369.5 0V181M380.5 0V181M391.5 0V181M400.5 0V181M408.5 0V181M0 11.5H460M0 21.5H460M0 31.5H460M0 41.5H460M0 51.5H460M0 61.5H460M0 71.5H460M0 81.5H460M0 91.5H460M0 101.5H460M0 111.5H460M0 121.5H460M0 131.5H460M0 141.5H460M0 151.5H460M0 161.5H460M0 171.5H460" stroke="#808080" fill="none" shape-rendering="crispEdges"/><polyline points="95.0 182.3 96.0 181.6 97.0 180.8 98.0 180.1 99.0 179.3 100.0 178.6 101.0 177.8 102.0 177.0 103.0 176.3 104.0 175.5 105.0 174.8 106.0 174.0 107.0 173.2 108.0 172.5 109.0 171.7 110.0 171.0 111.0 170.2 112.0 169.4 113.0 168.7 114.0 167.9 115.0 167.2 116.0 166.4 117.0 165.7 118.0 164.9 119.0 164.1 120.0 163.4 121.0 162.6 122.0 161.9 123.0 161.1 124.0 160.3 125.0 159.6 126.0 158.8 127.0 158.0 128.0 157.3 129.0 156.5 130.0 155.8 131.0 155.0 132.0 154.2 133.0 153.5 134.0 152.7 135.0 151.9 136.0 151.2 137.0 150.4 138.0 149.7 139.0 148.9 140.0 148.1 141.0 147.4 142.0 146.6 143.0 145.8 144.0 145.1 145.0 144.3 146.0 143.5 147.0 142.8 148.0 142.0 149.0 141.2 150.0 140.5 151.0 139.7 152.0 138.9 153.0 138.2 154.0 137.4 155.0 136.6 156.0 135.9 157.0 135.1 158.0 134.3 159.0 133.6 160.0 132.8 161.0 132.0 162.0 131.2 163.0 130.5 164.0 129.7 165.0 128.9 166.0 128.2 167.0 127.4 168.0 126.6 169.0 125.8 170.0 125.1 171.0 124.3 172.0 123.5 173.0 122.7 174.0 122.0 175.0 121.2 176.0 120.4 177.0 119.6 178.0 118.9 179.0 118.1 180.0 117.3 181.0 116.5 182.0 115.7 183.0 115.0 184.0 114.2 185.0 113.4 186.0 112.6 187.0 111.8 188.0 111.1 189.0 110.3 190.0 109.5 191.0 108.7 192.0 107.9 193.0 107.1 194.0 106.4 195.0 105.6 196.0 104.8 197.0 104.0 198.0 103.2 199.0 102.4 200.0 101.6 201.0 100.8 202.0 100.1 203.0 99.3 204.0 98.5 205.0 97.7 206.0 96.9 207.0 96.1 208.0 95.3 209.0 94.5 210.0 93.8 211.0 93.0 212.0 92.2 213.0 91.4 214.0 90.6 215.0 89.8 216.0 89.0 217.0 88.2 218.0 87.4 219.0 86.7 220.0 85.9 221.0 85.1 222.0 84.3 223.0 83.5 224.0 82.8 225.0 82.0 226.0 81.2 227.0 80.4 228.0 79.7 229.0 78.9 230.0 78.1 231.0 77.4 232.0 76.6 233.0 75.8 234.0 75.1 235.0 74.3 236.0 73.6 237.0 72.8 238.0 72.1 239.0 71.4 240.0 70.6 241.0 69.9 242.0 69.2 243.0 68.5 244.0 67.8 245.0 67.1 246.0 66.4 247.0 65.8 248.0 65.1 249.0 64.4 250.0 63.8 251.0 63.2 252.0 62.5 253.0 61.9 254.0 61.3 255.0 60.7 256.0 60.2 257.0 59.6 258.0 59.1 259.0 58.5 260.0 58.0 261.0 57.5 262.0 57.0 263.0 56.5 264.0 56.1 265.0 55.6 266.0 55.2 267.0 54.8 268.0 54.4 269.0 54.0 270.0 53.7 271.0 53.3 272.0 53.0 273.0 52.7 274.0 52.4 275.0 52.1 276.0 51.9 277.0 51.6 278.0 51.4 279.0 51.2 280.0 51.0 281.0 50.8 282.0 50.6 283.0 50.4 284.0 50.3 285.0 50.1 286.0 50.0 287.0 49.9 288.0 49.8 289.0 49.7 290.0 49.6 291.0 49.5 292.0 49.5 293.0 49.4 294.0 49.3 295.0 49.3 296.0 49.3 297.0 49.2 298.0 49.2 299.0 49.2 300.0 49.2 301.0 49.1 302.0 49.1 303.0 49.1 304.0 49.1 305.0 49.1 306.0 49.2 307.0 49.2 308.0 49.2 309.0 49.2 310.0 49.2 311.0 49.2 312.0 49.3 313.0 49.3 314.0 49.3 315.0 49.3 316.0 49.4 317.0 49.4 318.0 49.4 319.0 49.4 320.0 49.5 321.0 49.5 322.0 49.5 323.0 49.6 324.0 49.6 325.0 49.7 326.0 49.7 327.0 49.7 328.0 49.8 329.0 49.8 330.0 49.8 331.0 49.9 332.0 49.9 333.0 49.9 334.0 50.0 335.0 50.0 336.0 50.0 337.0 50.1 338.0 50.1 339.0 50.1 340.0 50.2 341.0 50.2 342.0 50.2 343.0 50.3 344.0 50.3 345.0 50.3 346.0 50.3 347.0 50.4 348.0 50.4 349.0 50.4 350.0 50.5 351.0 50.5 352.0 50.5 353.0 50.5 354.0 50.6 355.0 50.6 356.0 50.6 357.0 50.6 358.0 50.7 359.0 50.7 360.0 50.7 361.0 50.7 362.0 50.8 363.0 50.8 364.0 50.8 365.0 50.8 366.0 50.8 367.0 50.9 368.0 50.9 369.0 50.9 370.0 50.9 371.0 50.9 372.0 51.0 373.0 51.0 374.0 51.0 375.0 51.0 376.0 51.0 377.0 51.0 378.0 51.1 379.0 51.1 380.0 51.1 381.0 51.1 382.0 51.1 383.0 51.1 384.0 51.2 385.0 51.2 386.0 51.2 387.0 51.2 388.0 51.2 389.0 51.2 390.0 51.2 391.0 51.2 392.0 51.3 393.0 51.3 394.0 51.3 395.0 51.3 396.0 51.3 397.0 51.3 398.0 51.3 399.0 51.3 400.0 51.3 401.0 51.3 402.0 51.4 403.0 51.4 404.0 51.4 405.0 51.4 406.0 51.4 407.0 51.4 408.0 51.4 409.0 51.4 410.0 51.4 411.0 51.4 412.0 51.4 413.0 51.4 414.0 51.4 415.0 51.4 416.0 51.5 417.0 51.5 418.0 51.5 419.0 51.5 420.0 51.5 421.0 51.5 422.0 51.5 423.0 51.5 424.0 51.5 425.0 51.5 426.0 51.5 427.0 51.5 428.0 51.5 429.0 51.5 430.0 51.5 431.0 51.5 432.0 51.5 433.0 51.5 434.0 51.5 435.0 51.5 436.0 51.6 437.0 51.6 438.0 51.6 439.0 51.6 440.0 51.6 441.0 51.6 442.0 51.6 443.0 51.6 444.0 51.6 445.0 51.6 446.0 51.6 447.0 51.6 448.0 51.6 449.0 51.6 450.0 51.6 451.0 51.6 452.0 51.6 453.0 51.6 454.0 51.6 455.0 51.6 456.0 51.6 457.0 51.6 458.0 51.6 459.0 51.6 460.0 51.6 461.0 51.6" fill="none" stroke="#e020e0" stroke-width="2" stroke-linejoin="round" shape-rendering="crispEdges"/><polyline points="74.0 182.1 75.0 181.3 76.0 180.6 77.0 179.8 78.0 179.0 79.0 178.3 80.0 177.5 81.0 176.8 82.0 176.0 83.0 175.3 84.0 174.5 85.0 173.8 86.0 173.0 87.0 172.3 88.0 171.5 89.0 170.7 90.0 170.0 91.0 169.2 92.0 168.5 93.0 167.7 94.0 167.0 95.0 166.2 96.0 165.5 97.0 164.7 98.0 164.0 99.0 163.2 100.0 162.5 101.0 161.7 102.0 160.9 103.0 160.2 104.0 159.4 105.0 158.7 106.0 157.9 107.0 157.2 108.0 156.4 109.0 155.7 110.0 154.9 111.0 154.2 112.0 153.4 113.0 152.7 114.0 151.9 115.0 151.2 116.0 150.4 117.0 149.6 118.0 148.9 119.0 148.1 120.0 147.4 121.0 146.6 122.0 145.9 123.0 145.1 124.0 144.4 125.0 143.6 126.0 142.9 127.0 142.1 128.0 141.4 129.0 140.6 130.0 139.9 131.0 139.1 132.0 138.4 133.0 137.6 134.0 136.9 135.0 136.1 136.0 135.3 137.0 134.6 138.0 133.8 139.0 133.1 140.0 132.3 141.0 131.6 142.0 130.8 143.0 130.1 144.0 129.3 145.0 128.6 146.0 127.8 147.0 127.1 148.0 126.3 149.0 125.6 150.0 124.8 151.0 124.1 152.0 123.3 153.0 122.6 154.0 121.8 155.0 121.1 156.0 120.3 157.0 119.6 158.0 118.9 159.0 118.1 160.0 117.4 161.0 116.6 162.0 115.9 163.0 115.1 164.0 114.4 165.0 113.6 166.0 112.9 167.0 112.1 168.0 111.4 169.0 110.7 170.0 109.9 171.0 109.2 172.0 108.4 173.0 107.7 174.0 107.0 175.0 106.2 176.0 105.5 177.0 104.8 178.0 104.0 179.0 103.3 180.0 102.6 181.0 101.8 182.0 101.1 183.0 100.4 184.0 99.6 185.0 98.9 186.0 98.2 187.0 97.5 188.0 96.7 189.0 96.0 190.0 95.3 191.0 94.6 192.0 93.9 193.0 93.2 194.0 92.5 195.0 91.7 196.0 91.0 197.0 90.3 198.0 89.6 199.0 88.9 200.0 88.2 201.0 87.6 202.0 86.9 203.0 86.2 204.0 85.5 205.0 84.8 206.0 84.1 207.0 83.5 208.0 82.8 209.0 82.1 210.0 81.5 211.0 80.8 212.0 80.2 213.0 79.5 214.0 78.9 215.0 78.2 216.0 77.6 217.0 77.0 218.0 76.4 219.0 75.8 220.0 75.1 221.0 74.5 222.0 74.0 223.0 73.4 224.0 72.8 225.0 72.2 226.0 71.6 227.0 71.1 228.0 70.5 229.0 70.0 230.0 69.4 231.0 68.9 232.0 68.4 233.0 67.9 234.0 67.4 235.0 66.9 236.0 66.4 237.0 65.9 238.0 65.5 239.0 65.0 240.0 64.6 241.0 64.1 242.0 63.7 243.0 63.3 244.0 62.9 245.0 62.5 246.0 62.1 247.0 61.7 248.0 61.3 249.0 61.0 250.0 60.6 251.0 60.3 252.0 59.9 253.0 59.6 254.0 59.3 255.0 59.0 256.0 58.7 257.0 58.4 258.0 58.1 259.0 57.9 260.0 57.6 261.0 57.4 262.0 57.1 263.0 56.9 264.0 56.7 265.0 56.5 266.0 56.2 267.0 56.0 268.0 55.9 269.0 55.7 270.0 55.5 271.0 55.3 272.0 55.2 273.0 55.0 274.0 54.9 275.0 54.7 276.0 54.6 277.0 54.4 278.0 54.3 279.0 54.2 280.0 54.1 281.0 54.0 282.0 53.9 283.0 53.8 284.0 53.7 285.0 53.6 286.0 53.5 287.0 53.4 288.0 53.3 289.0 53.2 290.0 53.2 291.0 53.1 292.0 53.0 293.0 53.0 294.0 52.9 295.0 52.8 296.0 52.8 297.0 52.7 298.0 52.7 299.0 52.6 300.0 52.6 301.0 52.5 302.0 52.5 303.0 52.5 304.0 52.4 305.0 52.4 306.0 52.4 307.0 52.3 308.0 52.3 309.0 52.3 310.0 52.2 311.0 52.2 312.0 52.2 313.0 52.2 314.0 52.1 315.0 52.1 316.0 52.1 317.0 52.1 318.0 52.1 319.0 52.0 320.0 52.0 321.0 52.0 322.0 52.0 323.0 52.0 324.0 52.0 325.0 51.9 326.0 51.9 327.0 51.9 328.0 51.9 329.0 51.9 330.0 51.9 331.0 51.9 332.0 51.9 333.0 51.9 334.0 51.9 335.0 51.8 336.0 51.8 337.0 51.8 338.0 51.8 339.0 51.8 340.0 51.8 341.0 51.8 342.0 51.8 343.0 51.8 344.0 51.8 345.0 51.8 346.0 51.8 347.0 51.8 348.0 51.8 349.0 51.8 350.0 51.8 351.0 51.8 352.0 51.8 353.0 51.8 354.0 51.8 355.0 51.8 356.0 51.7 357.0 51.7 358.0 51.7 359.0 51.7 360.0 51.7 361.0 51.7 362.0 51.7 363.0 51.7 364.0 51.7 365.0 51.7 366.0 51.7 367.0 51.7 368.0 51.7 369.0 51.7 370.0 51.7 371.0 51.7 372.0 51.7 373.0 51.7 374.0 51.7 375.0 51.7 376.0 51.7 377.0 51.7 378.0 51.7 379.0 51.7 380.0 51.7 381.0 51.7 382.0 51.7 383.0 51.7 384.0 51.7 385.0 51.7 386.0 51.7 387.0 51.7 388.0 51.7 389.0 51.7 390.0 51.7 391.0 51.7 392.0 51.7 393.0 51.7 394.0 51.7 395.0 51.7 396.0 51.7 397.0 51.7 398.0 51.7 399.0 51.7 400.0 51.7 401.0 51.7 402.0 51.7 403.0 51.7 404.0 51.7 405.0 51.7 406.0 51.7 407.0 51.7 408.0 51.7 409.0 51.7 410.0 51.7 411.0 51.7 412.0 51.7 413.0 51.7 414.0 51.7 415.0 51.7 416.0 51.7 417.0 51.7 418.0 51.7 419.0 51.7 420.0 51.7 421.0 51.7 422.0 51.7 423.0 51.7 424.0 51.7 425.0 51.7 426.0 51.7 427.0 51.7 428.0 51.7 429.0 51.7 430.0 51.7 431.0 51.7 432.0 51.7 433.0 51.7 434.0 51.7 435.0 51.7 436.0 51.7 437.0 51.7 438.0 51.7 439.0 51.7 440.0 51.7 441.0 51.7 442.0 51.7 443.0 51.7 444.0 51.7 445.0 51.7 446.0 51.7 447.0 51.7 448.0 51.7 449.0 51.7 450.0 51.7 451.0 51.7 452.0 51.7 453.0 51.7 454.0 51.7 455.0 51.7 456.0 51.7 457.0 51.7 458.0 51.7 459.0 51.7 460.0 51.7 461.0 51.7" fill="none" stroke="#ffff20" stroke-width="2" stroke-linejoin="round" shape-rendering="crispEdges"/></svg>
<i style="left:47px;top:581px;width:3px;height:1px;background:#ffffff;"></i>
<i style="left:512px;top:581px;width:3px;height:1px;background:#ffffff;"></i>
<b class="t" style="left:29.83px;top:575px;height:14px;line-height:14px;font-size:12px;color:#fff;">dB</b>
<i style="left:47px;top:601px;width:3px;height:1px;background:#ffffff;"></i>
<i style="left:512px;top:601px;width:3px;height:1px;background:#ffffff;"></i>
<b class="t" style="left:31.16px;top:595px;height:14px;line-height:14px;font-size:12px;color:#fff;">92</b>
<i style="left:47px;top:621px;width:3px;height:1px;background:#ffffff;"></i>
<i style="left:512px;top:621px;width:3px;height:1px;background:#ffffff;"></i>
<b class="t" style="left:31.16px;top:615px;height:14px;line-height:14px;font-size:12px;color:#fff;">86</b>
<i style="left:47px;top:641px;width:3px;height:1px;background:#ffffff;"></i>
<i style="left:512px;top:641px;width:3px;height:1px;background:#ffffff;"></i>
<b class="t" style="left:31.16px;top:635px;height:14px;line-height:14px;font-size:12px;color:#fff;">80</b>
<i style="left:47px;top:661px;width:3px;height:1px;background:#ffffff;"></i>
<i style="left:512px;top:661px;width:3px;height:1px;background:#ffffff;"></i>
<b class="t" style="left:31.16px;top:655px;height:14px;line-height:14px;font-size:12px;color:#fff;">74</b>
<i style="left:47px;top:681px;width:3px;height:1px;background:#ffffff;"></i>
<i style="left:512px;top:681px;width:3px;height:1px;background:#ffffff;"></i>
<b class="t" style="left:31.16px;top:675px;height:14px;line-height:14px;font-size:12px;color:#fff;">68</b>
<i style="left:47px;top:701px;width:3px;height:1px;background:#ffffff;"></i>
<i style="left:512px;top:701px;width:3px;height:1px;background:#ffffff;"></i>
<b class="t" style="left:31.16px;top:695px;height:14px;line-height:14px;font-size:12px;color:#fff;">62</b>
<i style="left:47px;top:721px;width:3px;height:1px;background:#ffffff;"></i>
<i style="left:512px;top:721px;width:3px;height:1px;background:#ffffff;"></i>
<b class="t" style="left:31.16px;top:715px;height:14px;line-height:14px;font-size:12px;color:#fff;">56</b>
<i style="left:47px;top:741px;width:3px;height:1px;background:#ffffff;"></i>
<i style="left:512px;top:741px;width:3px;height:1px;background:#ffffff;"></i>
<b class="t" style="left:31.16px;top:735px;height:14px;line-height:14px;font-size:12px;color:#fff;">50</b>
<i style="left:51px;top:753px;width:1px;height:3px;background:#ffffff;"></i>
<i style="left:65px;top:753px;width:1px;height:3px;background:#ffffff;"></i>
<i style="left:77px;top:753px;width:1px;height:3px;background:#ffffff;"></i>
<i style="left:87px;top:753px;width:1px;height:3px;background:#ffffff;"></i>
<i style="left:96px;top:753px;width:1px;height:3px;background:#ffffff;"></i>
<i style="left:104px;top:753px;width:1px;height:3px;background:#ffffff;"></i>
<i style="left:157px;top:753px;width:1px;height:3px;background:#ffffff;"></i>
<i style="left:189px;top:753px;width:1px;height:3px;background:#ffffff;"></i>
<i style="left:211px;top:753px;width:1px;height:3px;background:#ffffff;"></i>
<i style="left:228px;top:753px;width:1px;height:3px;background:#ffffff;"></i>
<i style="left:242px;top:753px;width:1px;height:3px;background:#ffffff;"></i>
<i style="left:254px;top:753px;width:1px;height:3px;background:#ffffff;"></i>
<i style="left:264px;top:753px;width:1px;height:3px;background:#ffffff;"></i>
<i style="left:273px;top:753px;width:1px;height:3px;background:#ffffff;"></i>
<i style="left:281px;top:753px;width:1px;height:3px;background:#ffffff;"></i>
<i style="left:334px;top:753px;width:1px;height:3px;background:#ffffff;"></i>
<i style="left:365px;top:753px;width:1px;height:3px;background:#ffffff;"></i>
<i style="left:387px;top:753px;width:1px;height:3px;background:#ffffff;"></i>
<i style="left:405px;top:753px;width:1px;height:3px;background:#ffffff;"></i>
<i style="left:419px;top:753px;width:1px;height:3px;background:#ffffff;"></i>
<i style="left:430px;top:753px;width:1px;height:3px;background:#ffffff;"></i>
<i style="left:441px;top:753px;width:1px;height:3px;background:#ffffff;"></i>
<i style="left:450px;top:753px;width:1px;height:3px;background:#ffffff;"></i>
<i style="left:458px;top:753px;width:1px;height:3px;background:#ffffff;"></i>
<i style="left:511px;top:753px;width:1px;height:3px;background:#ffffff;"></i>
<b class="t" style="left:48.30px;top:758px;height:14px;line-height:14px;font-size:12px;color:#fff;letter-spacing:-0.224px;">5 Hz</b>
<b class="t" style="left:97.85px;top:758px;height:14px;line-height:14px;font-size:12px;color:#fff;">10</b>
<b class="t" style="left:222.33px;top:758px;height:14px;line-height:14px;font-size:12px;color:#fff;">50</b>
<b class="t" style="left:270.71px;top:758px;height:14px;line-height:14px;font-size:12px;color:#fff;">100</b>
<b class="t" style="left:394.39px;top:758px;height:14px;line-height:14px;font-size:12px;color:#fff;">500</b>
<b class="t" style="left:442.68px;top:758px;height:14px;line-height:14px;font-size:12px;color:#fff;">1000</b>
<b class="t" style="left:487.11px;top:758px;height:14px;line-height:14px;font-size:12px;color:#fff;">2000</b>
<i style="left:521px;top:538px;width:502px;height:238px;background:#000000;"></i>
<i style="left:522px;top:539px;width:499px;height:235px;background:#cacaca;"></i>
<i style="left:524px;top:541px;width:497px;height:233px;background:#808080;"></i>
<i style="left:528px;top:546px;width:38px;height:16px;background:#d4d0c8;"></i>
<i style="left:528px;top:546px;width:38px;height:1px;background:#ffffff;"></i>
<i style="left:528px;top:546px;width:1px;height:16px;background:#ffffff;"></i>
<i style="left:528px;top:561px;width:38px;height:1px;background:#404040;"></i>
<i style="left:565px;top:546px;width:1px;height:16px;background:#404040;"></i>
<i style="left:529px;top:560px;width:36px;height:1px;background:#808080;"></i>
<i style="left:564px;top:547px;width:1px;height:14px;background:#808080;"></i>
<b class="t" style="left:533.60px;top:547px;height:12px;line-height:12px;font-size:11px;color:#000;letter-spacing:-0.270px;">Clear</b>
<i style="left:569px;top:546px;width:43px;height:16px;background:#d4d0c8;"></i>
<i style="left:569px;top:546px;width:43px;height:1px;background:#ffffff;"></i>
<i style="left:569px;top:546px;width:1px;height:16px;background:#ffffff;"></i>
<i style="left:569px;top:561px;width:43px;height:1px;background:#404040;"></i>
<i style="left:611px;top:546px;width:1px;height:16px;background:#404040;"></i>
<i style="left:570px;top:560px;width:41px;height:1px;background:#808080;"></i>
<i style="left:610px;top:547px;width:1px;height:14px;background:#808080;"></i>
<b class="t" style="left:572.85px;top:547px;height:12px;line-height:12px;font-size:11px;color:#000;letter-spacing:0.140px;">Cursor</b>
<b class="t" style="left:686.22px;top:550px;height:14px;line-height:14px;font-size:12px;color:#000;font-weight:bold;letter-spacing:-0.110px;">Group Delay (Milliseconds/Hz)</b>
<b class="t" style="left:685.22px;top:549px;height:14px;line-height:14px;font-size:12px;color:#fff;font-weight:bold;letter-spacing:-0.110px;">Group Delay (Milliseconds/Hz)</b>
<i style="left:554px;top:570px;width:462px;height:183px;background:#d0d0d0;"></i>
<i style="left:556px;top:572px;width:458px;height:179px;background:#000000;"></i>
<svg style="left:554px;top:570px" width="462" height="183" viewBox="0 0 462 183"><path d="M15.5 0V181M27.5 0V181M37.5 0V181M46.5 0V181M54.5 0V181M107.5 0V181M139.5 0V181M161.5 0V181M178.5 0V181M192.5 0V181M204.5 0V181M214.5 0V181M223.5 0V181M231.5 0V181M284.5 0V181M315.5 0V181M337.5 0V181M355.5 0V181M369.5 0V181M380.5 0V181M391.5 0V181M400.5 0V181M408.5 0V181M0 11.5H460M0 21.5H460M0 31.5H460M0 41.5H460M0 51.5H460M0 61.5H460M0 71.5H460M0 81.5H460M0 91.5H460M0 101.5H460M0 111.5H460M0 121.5H460M0 131.5H460M0 141.5H460M0 151.5H460M0 161.5H460M0 171.5H460" stroke="#808080" fill="none" shape-rendering="crispEdges"/><polyline points="1.0 171.0 2.0 171.0 3.0 171.0 4.0 171.0 5.0 171.0 6.0 171.0 7.0 171.0 8.0 171.0 9.0 171.0 10.0 171.0 11.0 171.0 12.0 171.0 13.0 171.0 14.0 171.0 15.0 171.0 16.0 171.0 17.0 171.0 18.0 171.0 19.0 171.0 20.0 171.0 21.0 171.0 22.0 171.0 23.0 171.0 24.0 171.0 25.0 171.0 26.0 171.0 27.0 171.0 28.0 171.0 29.0 171.0 30.0 171.0 31.0 171.0 32.0 171.0 33.0 171.0 34.0 171.0 35.0 171.0 36.0 171.0 37.0 171.0 38.0 171.0 39.0 171.0 40.0 171.0 41.0 171.0 42.0 171.0 43.0 171.0 44.0 171.0 45.0 171.0 46.0 171.0 47.0 170.9 48.0 170.9 49.0 170.9 50.0 170.9 51.0 170.9 52.0 170.9 53.0 170.9 54.0 170.9 55.0 170.9 56.0 170.9 57.0 170.9 58.0 170.9 59.0 170.9 60.0 170.9 61.0 170.9 62.0 170.9 63.0 170.9 64.0 170.9 65.0 170.9 66.0 170.9 67.0 170.9 68.0 170.9 69.0 170.9 70.0 170.9 71.0 170.9 72.0 170.9 73.0 170.9 74.0 170.9 75.0 170.9 76.0 170.9 77.0 170.9 78.0 170.9 79.0 170.9 80.0 170.9 81.0 170.9 82.0 170.9 83.0 170.9 84.0 170.9 85.0 170.8 86.0 170.8 87.0 170.8 88.0 170.8 89.0 170.8 90.0 170.8 91.0 170.8 92.0 170.8 93.0 170.8 94.0 170.8 95.0 170.8 96.0 170.8 97.0 170.8 98.0 170.8 99.0 170.8 100.0 170.8 101.0 170.8 102.0 170.8 103.0 170.7 104.0 170.7 105.0 170.7 106.0 170.7 107.0 170.7 108.0 170.7 109.0 170.7 110.0 170.7 111.0 170.7 112.0 170.7 113.0 170.7 114.0 170.7 115.0 170.7 116.0 170.6 117.0 170.6 118.0 170.6 119.0 170.6 120.0 170.6 121.0 170.6 122.0 170.6 123.0 170.6 124.0 170.6 125.0 170.5 126.0 170.5 127.0 170.5 128.0 170.5 129.0 170.5 130.0 170.5 131.0 170.5 132.0 170.5 133.0 170.4 134.0 170.4 135.0 170.4 136.0 170.4 137.0 170.4 138.0 170.4 139.0 170.3 140.0 170.3 141.0 170.3 142.0 170.3 143.0 170.3 144.0 170.2 145.0 170.2 146.0 170.2 147.0 170.2 148.0 170.2 149.0 170.1 150.0 170.1 151.0 170.1 152.0 170.1 153.0 170.0 154.0 170.0 155.0 170.0 156.0 170.0 157.0 169.9 158.0 169.9 159.0 169.9 160.0 169.8 161.0 169.8 162.0 169.8 163.0 169.8 164.0 169.7 165.0 169.7 166.0 169.7 167.0 169.6 168.0 169.6 169.0 169.5 170.0 169.5 171.0 169.5 172.0 169.4 173.0 169.4 174.0 169.3 175.0 169.3 176.0 169.2 177.0 169.2 178.0 169.1 179.0 169.1 180.0 169.0 181.0 169.0 182.0 168.9 183.0 168.9 184.0 168.8 185.0 168.8 186.0 168.7 187.0 168.7 188.0 168.6 189.0 168.5 190.0 168.5 191.0 168.4 192.0 168.3 193.0 168.3 194.0 168.2 195.0 168.1 196.0 168.0 197.0 168.0 198.0 167.9 199.0 167.8 200.0 167.7 201.0 167.6 202.0 167.5 203.0 167.4 204.0 167.4 205.0 167.3 206.0 167.2 207.0 167.1 208.0 167.0 209.0 166.9 210.0 166.8 211.0 166.6 212.0 166.5 213.0 166.4 214.0 166.3 215.0 166.2 216.0 166.1 217.0 166.0 218.0 165.8 219.0 165.7 220.0 165.6 221.0 165.5 222.0 165.3 223.0 165.2 224.0 165.1 225.0 164.9 226.0 164.8 227.0 164.7 228.0 164.5 229.0 164.4 230.0 164.3 231.0 164.1 232.0 164.0 233.0 163.9 234.0 163.7 235.0 163.6 236.0 163.5 237.0 163.3 238.0 163.2 239.0 163.1 240.0 163.0 241.0 162.9 242.0 162.7 243.0 162.6 244.0 162.5 245.0 162.5 246.0 162.4 247.0 162.3 248.0 162.2 249.0 162.2 250.0 162.1 251.0 162.1 252.0 162.1 253.0 162.1 254.0 162.1 255.0 162.1 256.0 162.1 257.0 162.2 258.0 162.2 259.0 162.3 260.0 162.4 261.0 162.5 262.0 162.6 263.0 162.8 264.0 162.9 265.0 163.1 266.0 163.3 267.0 163.5 268.0 163.7 269.0 163.9 270.0 164.2 271.0 164.5 272.0 164.7 273.0 165.0 274.0 165.3 275.0 165.6 276.0 165.9 277.0 166.2 278.0 166.6 279.0 166.9 280.0 167.2 281.0 167.6 282.0 167.9 283.0 168.3 284.0 168.6 285.0 169.0 286.0 169.3 287.0 169.7 288.0 170.0 289.0 170.3 290.0 170.7 291.0 171.0 292.0 171.3 293.0 171.6 294.0 171.9 295.0 172.2 296.0 172.5 297.0 172.8 298.0 173.1 299.0 173.4 300.0 173.7 301.0 173.9 302.0 174.2 303.0 174.4 304.0 174.7 305.0 174.9 306.0 175.1 307.0 175.3 308.0 175.5 309.0 175.8 310.0 175.9 311.0 176.1 312.0 176.3 313.0 176.5 314.0 176.7 315.0 176.8 316.0 177.0 317.0 177.2 318.0 177.3 319.0 177.5 320.0 177.6 321.0 177.7 322.0 177.9 323.0 178.0 324.0 178.1 325.0 178.2 326.0 178.3 327.0 178.5 328.0 178.6 329.0 178.7 330.0 178.8 331.0 178.9 332.0 178.9 333.0 179.0 334.0 179.1 335.0 179.2 336.0 179.3 337.0 179.4 338.0 179.4 339.0 179.5 340.0 179.6 341.0 179.6 342.0 179.7 343.0 179.8 344.0 179.8 345.0 179.9 346.0 179.9 347.0 180.0 348.0 180.0 349.0 180.1 350.0 180.1 351.0 180.2 352.0 180.2 353.0 180.3 354.0 180.3 355.0 180.4 356.0 180.4 357.0 180.4 358.0 180.5 359.0 180.5 360.0 180.6 361.0 180.6 362.0 180.6 363.0 180.6 364.0 180.7 365.0 180.7 366.0 180.7 367.0 180.8 368.0 180.8 369.0 180.8 370.0 180.8 371.0 180.9 372.0 180.9 373.0 180.9 374.0 180.9 375.0 181.0 376.0 181.0 377.0 181.0 378.0 181.0 379.0 181.0 380.0 181.1 381.0 181.1 382.0 181.1 383.0 181.1 384.0 181.1 385.0 181.1 386.0 181.2 387.0 181.2 388.0 181.2 389.0 181.2 390.0 181.2 391.0 181.2 392.0 181.2 393.0 181.3 394.0 181.3 395.0 181.3 396.0 181.3 397.0 181.3 398.0 181.3 399.0 181.3 400.0 181.3 401.0 181.3 402.0 181.4 403.0 181.4 404.0 181.4 405.0 181.4 406.0 181.4 407.0 181.4 408.0 181.4 409.0 181.4 410.0 181.4 411.0 181.4 412.0 181.4 413.0 181.4 414.0 181.4 415.0 181.5 416.0 181.5 417.0 181.5 418.0 181.5 419.0 181.5 420.0 181.5 421.0 181.5 422.0 181.5 423.0 181.5 424.0 181.5 425.0 181.5 426.0 181.5 427.0 181.5 428.0 181.5 429.0 181.5 430.0 181.5 431.0 181.5 432.0 181.5 433.0 181.5 434.0 181.6 435.0 181.6 436.0 181.6 437.0 181.6 438.0 181.6 439.0 181.6 440.0 181.6 441.0 181.6 442.0 181.6 443.0 181.6 444.0 181.6 445.0 181.6 446.0 181.6 447.0 181.6 448.0 181.6 449.0 181.6 450.0 181.6 451.0 181.6 452.0 181.6 453.0 181.6 454.0 181.6 455.0 181.6 456.0 181.6 457.0 181.6 458.0 181.6 459.0 181.6 460.0 181.6 461.0 181.6" fill="none" stroke="#e020e0" stroke-width="2" stroke-linejoin="round" shape-rendering="crispEdges"/><polyline points="1.0 163.4 2.0 163.4 3.0 163.4 4.0 163.4 5.0 163.3 6.0 163.3 7.0 163.3 8.0 163.3 9.0 163.3 10.0 163.3 11.0 163.3 12.0 163.3 13.0 163.3 14.0 163.3 15.0 163.3 16.0 163.3 17.0 163.3 18.0 163.3 19.0 163.3 20.0 163.3 21.0 163.3 22.0 163.3 23.0 163.3 24.0 163.3 25.0 163.3 26.0 163.3 27.0 163.3 28.0 163.3 29.0 163.3 30.0 163.3 31.0 163.3 32.0 163.3 33.0 163.3 34.0 163.3 35.0 163.3 36.0 163.3 37.0 163.3 38.0 163.3 39.0 163.3 40.0 163.3 41.0 163.3 42.0 163.3 43.0 163.3 44.0 163.3 45.0 163.3 46.0 163.3 47.0 163.3 48.0 163.3 49.0 163.3 50.0 163.3 51.0 163.3 52.0 163.3 53.0 163.3 54.0 163.3 55.0 163.3 56.0 163.3 57.0 163.3 58.0 163.3 59.0 163.2 60.0 163.2 61.0 163.2 62.0 163.2 63.0 163.2 64.0 163.2 65.0 163.2 66.0 163.2 67.0 163.2 68.0 163.2 69.0 163.2 70.0 163.2 71.0 163.2 72.0 163.2 73.0 163.2 74.0 163.2 75.0 163.2 76.0 163.2 77.0 163.2 78.0 163.2 79.0 163.2 80.0 163.1 81.0 163.1 82.0 163.1 83.0 163.1 84.0 163.1 85.0 163.1 86.0 163.1 87.0 163.1 88.0 163.1 89.0 163.1 90.0 163.1 91.0 163.1 92.0 163.1 93.0 163.1 94.0 163.0 95.0 163.0 96.0 163.0 97.0 163.0 98.0 163.0 99.0 163.0 100.0 163.0 101.0 163.0 102.0 163.0 103.0 163.0 104.0 163.0 105.0 162.9 106.0 162.9 107.0 162.9 108.0 162.9 109.0 162.9 110.0 162.9 111.0 162.9 112.0 162.9 113.0 162.8 114.0 162.8 115.0 162.8 116.0 162.8 117.0 162.8 118.0 162.8 119.0 162.8 120.0 162.7 121.0 162.7 122.0 162.7 123.0 162.7 124.0 162.7 125.0 162.7 126.0 162.6 127.0 162.6 128.0 162.6 129.0 162.6 130.0 162.6 131.0 162.5 132.0 162.5 133.0 162.5 134.0 162.5 135.0 162.4 136.0 162.4 137.0 162.4 138.0 162.4 139.0 162.4 140.0 162.3 141.0 162.3 142.0 162.3 143.0 162.2 144.0 162.2 145.0 162.2 146.0 162.2 147.0 162.1 148.0 162.1 149.0 162.1 150.0 162.0 151.0 162.0 152.0 162.0 153.0 161.9 154.0 161.9 155.0 161.9 156.0 161.8 157.0 161.8 158.0 161.8 159.0 161.7 160.0 161.7 161.0 161.7 162.0 161.6 163.0 161.6 164.0 161.5 165.0 161.5 166.0 161.5 167.0 161.4 168.0 161.4 169.0 161.3 170.0 161.3 171.0 161.2 172.0 161.2 173.0 161.1 174.0 161.1 175.0 161.1 176.0 161.0 177.0 161.0 178.0 160.9 179.0 160.9 180.0 160.8 181.0 160.8 182.0 160.7 183.0 160.7 184.0 160.6 185.0 160.6 186.0 160.5 187.0 160.5 188.0 160.4 189.0 160.4 190.0 160.3 191.0 160.3 192.0 160.2 193.0 160.2 194.0 160.1 195.0 160.1 196.0 160.0 197.0 160.0 198.0 160.0 199.0 159.9 200.0 159.9 201.0 159.8 202.0 159.8 203.0 159.8 204.0 159.7 205.0 159.7 206.0 159.7 207.0 159.7 208.0 159.6 209.0 159.6 210.0 159.6 211.0 159.6 212.0 159.6 213.0 159.6 214.0 159.6 215.0 159.6 216.0 159.6 217.0 159.6 218.0 159.7 219.0 159.7 220.0 159.7 221.0 159.8 222.0 159.8 223.0 159.9 224.0 159.9 225.0 160.0 226.0 160.1 227.0 160.1 228.0 160.2 229.0 160.3 230.0 160.4 231.0 160.5 232.0 160.7 233.0 160.8 234.0 160.9 235.0 161.1 236.0 161.2 237.0 161.4 238.0 161.6 239.0 161.7 240.0 161.9 241.0 162.1 242.0 162.3 243.0 162.5 244.0 162.7 245.0 163.0 246.0 163.2 247.0 163.4 248.0 163.7 249.0 163.9 250.0 164.2 251.0 164.4 252.0 164.7 253.0 165.0 254.0 165.2 255.0 165.5 256.0 165.8 257.0 166.1 258.0 166.3 259.0 166.6 260.0 166.9 261.0 167.2 262.0 167.5 263.0 167.8 264.0 168.1 265.0 168.4 266.0 168.6 267.0 168.9 268.0 169.2 269.0 169.5 270.0 169.8 271.0 170.0 272.0 170.3 273.0 170.6 274.0 170.9 275.0 171.1 276.0 171.4 277.0 171.6 278.0 171.9 279.0 172.1 280.0 172.4 281.0 172.6 282.0 172.9 283.0 173.1 284.0 173.3 285.0 173.5 286.0 173.7 287.0 174.0 288.0 174.2 289.0 174.4 290.0 174.6 291.0 174.8 292.0 174.9 293.0 175.1 294.0 175.3 295.0 175.5 296.0 175.7 297.0 175.8 298.0 176.0 299.0 176.1 300.0 176.3 301.0 176.5 302.0 176.6 303.0 176.7 304.0 176.9 305.0 177.0 306.0 177.1 307.0 177.3 308.0 177.4 309.0 177.5 310.0 177.6 311.0 177.7 312.0 177.9 313.0 178.0 314.0 178.1 315.0 178.2 316.0 178.3 317.0 178.4 318.0 178.5 319.0 178.5 320.0 178.6 321.0 178.7 322.0 178.8 323.0 178.9 324.0 179.0 325.0 179.0 326.0 179.1 327.0 179.2 328.0 179.3 329.0 179.3 330.0 179.4 331.0 179.5 332.0 179.5 333.0 179.6 334.0 179.6 335.0 179.7 336.0 179.7 337.0 179.8 338.0 179.9 339.0 179.9 340.0 180.0 341.0 180.0 342.0 180.0 343.0 180.1 344.0 180.1 345.0 180.2 346.0 180.2 347.0 180.3 348.0 180.3 349.0 180.3 350.0 180.4 351.0 180.4 352.0 180.4 353.0 180.5 354.0 180.5 355.0 180.5 356.0 180.6 357.0 180.6 358.0 180.6 359.0 180.7 360.0 180.7 361.0 180.7 362.0 180.7 363.0 180.8 364.0 180.8 365.0 180.8 366.0 180.8 367.0 180.9 368.0 180.9 369.0 180.9 370.0 180.9 371.0 181.0 372.0 181.0 373.0 181.0 374.0 181.0 375.0 181.0 376.0 181.0 377.0 181.1 378.0 181.1 379.0 181.1 380.0 181.1 381.0 181.1 382.0 181.1 383.0 181.2 384.0 181.2 385.0 181.2 386.0 181.2 387.0 181.2 388.0 181.2 389.0 181.2 390.0 181.2 391.0 181.3 392.0 181.3 393.0 181.3 394.0 181.3 395.0 181.3 396.0 181.3 397.0 181.3 398.0 181.3 399.0 181.3 400.0 181.4 401.0 181.4 402.0 181.4 403.0 181.4 404.0 181.4 405.0 181.4 406.0 181.4 407.0 181.4 408.0 181.4 409.0 181.4 410.0 181.4 411.0 181.4 412.0 181.4 413.0 181.5 414.0 181.5 415.0 181.5 416.0 181.5 417.0 181.5 418.0 181.5 419.0 181.5 420.0 181.5 421.0 181.5 422.0 181.5 423.0 181.5 424.0 181.5 425.0 181.5 426.0 181.5 427.0 181.5 428.0 181.5 429.0 181.5 430.0 181.5 431.0 181.5 432.0 181.6 433.0 181.6 434.0 181.6 435.0 181.6 436.0 181.6 437.0 181.6 438.0 181.6 439.0 181.6 440.0 181.6 441.0 181.6 442.0 181.6 443.0 181.6 444.0 181.6 445.0 181.6 446.0 181.6 447.0 181.6 448.0 181.6 449.0 181.6 450.0 181.6 451.0 181.6 452.0 181.6 453.0 181.6 454.0 181.6 455.0 181.6 456.0 181.6 457.0 181.6 458.0 181.6 459.0 181.6 460.0 181.6 461.0 181.6" fill="none" stroke="#ffff20" stroke-width="2" stroke-linejoin="round" shape-rendering="crispEdges"/></svg>
<i style="left:551px;top:571px;width:3px;height:1px;background:#ffffff;"></i>
<i style="left:1016px;top:571px;width:3px;height:1px;background:#ffffff;"></i>
<b class="t" style="left:532.50px;top:565px;height:14px;line-height:14px;font-size:12px;color:#fff;">ms</b>
<i style="left:551px;top:591px;width:3px;height:1px;background:#ffffff;"></i>
<i style="left:1016px;top:591px;width:3px;height:1px;background:#ffffff;"></i>
<b class="t" style="left:535.16px;top:585px;height:14px;line-height:14px;font-size:12px;color:#fff;">16</b>
<i style="left:551px;top:611px;width:3px;height:1px;background:#ffffff;"></i>
<i style="left:1016px;top:611px;width:3px;height:1px;background:#ffffff;"></i>
<b class="t" style="left:535.16px;top:605px;height:14px;line-height:14px;font-size:12px;color:#fff;">14</b>
<i style="left:551px;top:631px;width:3px;height:1px;background:#ffffff;"></i>
<i style="left:1016px;top:631px;width:3px;height:1px;background:#ffffff;"></i>
<b class="t" style="left:535.16px;top:625px;height:14px;line-height:14px;font-size:12px;color:#fff;">12</b>
<i style="left:551px;top:651px;width:3px;height:1px;background:#ffffff;"></i>
<i style="left:1016px;top:651px;width:3px;height:1px;background:#ffffff;"></i>
<b class="t" style="left:535.16px;top:645px;height:14px;line-height:14px;font-size:12px;color:#fff;">10</b>
<i style="left:551px;top:671px;width:3px;height:1px;background:#ffffff;"></i>
<i style="left:1016px;top:671px;width:3px;height:1px;background:#ffffff;"></i>
<b class="t" style="left:541.83px;top:665px;height:14px;line-height:14px;font-size:12px;color:#fff;">8</b>
<i style="left:551px;top:691px;width:3px;height:1px;background:#ffffff;"></i>
<i style="left:1016px;top:691px;width:3px;height:1px;background:#ffffff;"></i>
<b class="t" style="left:541.83px;top:685px;height:14px;line-height:14px;font-size:12px;color:#fff;">6</b>
<i style="left:551px;top:711px;width:3px;height:1px;background:#ffffff;"></i>
<i style="left:1016px;top:711px;width:3px;height:1px;background:#ffffff;"></i>
<b class="t" style="left:541.83px;top:705px;height:14px;line-height:14px;font-size:12px;color:#fff;">4</b>
<i style="left:551px;top:731px;width:3px;height:1px;background:#ffffff;"></i>
<i style="left:1016px;top:731px;width:3px;height:1px;background:#ffffff;"></i>
<b class="t" style="left:541.83px;top:725px;height:14px;line-height:14px;font-size:12px;color:#fff;">2</b>
<i style="left:551px;top:751px;width:3px;height:1px;background:#ffffff;"></i>
<i style="left:1016px;top:751px;width:3px;height:1px;background:#ffffff;"></i>
<b class="t" style="left:541.83px;top:745px;height:14px;line-height:14px;font-size:12px;color:#fff;">0</b>
<i style="left:555px;top:753px;width:1px;height:3px;background:#ffffff;"></i>
<i style="left:569px;top:753px;width:1px;height:3px;background:#ffffff;"></i>
<i style="left:581px;top:753px;width:1px;height:3px;background:#ffffff;"></i>
<i style="left:591px;top:753px;width:1px;height:3px;background:#ffffff;"></i>
<i style="left:600px;top:753px;width:1px;height:3px;background:#ffffff;"></i>
<i style="left:608px;top:753px;width:1px;height:3px;background:#ffffff;"></i>
<i style="left:661px;top:753px;width:1px;height:3px;background:#ffffff;"></i>
<i style="left:693px;top:753px;width:1px;height:3px;background:#ffffff;"></i>
<i style="left:715px;top:753px;width:1px;height:3px;background:#ffffff;"></i>
<i style="left:732px;top:753px;width:1px;height:3px;background:#ffffff;"></i>
<i style="left:746px;top:753px;width:1px;height:3px;background:#ffffff;"></i>
<i style="left:758px;top:753px;width:1px;height:3px;background:#ffffff;"></i>
<i style="left:768px;top:753px;width:1px;height:3px;background:#ffffff;"></i>
<i style="left:777px;top:753px;width:1px;height:3px;background:#ffffff;"></i>
<i style="left:785px;top:753px;width:1px;height:3px;background:#ffffff;"></i>
<i style="left:838px;top:753px;width:1px;height:3px;background:#ffffff;"></i>
<i style="left:869px;top:753px;width:1px;height:3px;background:#ffffff;"></i>
<i style="left:891px;top:753px;width:1px;height:3px;background:#ffffff;"></i>
<i style="left:909px;top:753px;width:1px;height:3px;background:#ffffff;"></i>
<i style="left:923px;top:753px;width:1px;height:3px;background:#ffffff;"></i>
<i style="left:934px;top:753px;width:1px;height:3px;background:#ffffff;"></i>
<i style="left:945px;top:753px;width:1px;height:3px;background:#ffffff;"></i>
<i style="left:954px;top:753px;width:1px;height:3px;background:#ffffff;"></i>
<i style="left:962px;top:753px;width:1px;height:3px;background:#ffffff;"></i>
<i style="left:1015px;top:753px;width:1px;height:3px;background:#ffffff;"></i>
<b class="t" style="left:552.30px;top:758px;height:14px;line-height:14px;font-size:12px;color:#fff;letter-spacing:-0.224px;">5 Hz</b>
<b class="t" style="left:601.85px;top:758px;height:14px;line-height:14px;font-size:12px;color:#fff;">10</b>
<b class="t" style="left:726.33px;top:758px;height:14px;line-height:14px;font-size:12px;color:#fff;">50</b>
<b class="t" style="left:774.71px;top:758px;height:14px;line-height:14px;font-size:12px;color:#fff;">100</b>
<b class="t" style="left:898.39px;top:758px;height:14px;line-height:14px;font-size:12px;color:#fff;">500</b>
<b class="t" style="left:946.68px;top:758px;height:14px;line-height:14px;font-size:12px;color:#fff;">1000</b>
<b class="t" style="left:991.11px;top:758px;height:14px;line-height:14px;font-size:12px;color:#fff;">2000</b>
<svg style="left:0;top:0;pointer-events:none" width="1040" height="793" viewBox="0 0 1040 793" shape-rendering="crispEdges"><rect x="12" y="5" width="5" height="1" fill="#08081c"/><rect x="11" y="6" width="2" height="1" fill="#08081c"/><rect x="13" y="6" width="1" height="1" fill="#e070d0"/><rect x="14" y="6" width="1" height="1" fill="#7020a0"/><rect x="15" y="6" width="2" height="1" fill="#08081c"/><rect x="6" y="7" width="6" height="1" fill="#08081c"/><rect x="12" y="7" width="1" height="1" fill="#c040a0"/><rect x="13" y="7" width="1" height="1" fill="#e070d0"/><rect x="14" y="7" width="5" height="1" fill="#08081c"/><rect x="6" y="8" width="5" height="1" fill="#08081c"/><rect x="11" y="8" width="1" height="1" fill="#c040a0"/><rect x="12" y="8" width="1" height="1" fill="#e070d0"/><rect x="13" y="8" width="3" height="1" fill="#08081c"/><rect x="16" y="8" width="2" height="1" fill="#f0e070"/><rect x="18" y="8" width="3" height="1" fill="#08081c"/><rect x="6" y="9" width="2" height="1" fill="#08081c"/><rect x="8" y="9" width="2" height="1" fill="#2020d0"/><rect x="10" y="9" width="3" height="1" fill="#e070d0"/><rect x="13" y="9" width="2" height="1" fill="#c040a0"/><rect x="15" y="9" width="1" height="1" fill="#08081c"/><rect x="16" y="9" width="2" height="1" fill="#f0e070"/><rect x="18" y="9" width="3" height="1" fill="#08081c"/><rect x="6" y="10" width="2" height="1" fill="#08081c"/><rect x="8" y="10" width="2" height="1" fill="#2020d0"/><rect x="10" y="10" width="1" height="1" fill="#08081c"/><rect x="11" y="10" width="1" height="1" fill="#e070d0"/><rect x="12" y="10" width="2" height="1" fill="#d040d0"/><rect x="14" y="10" width="2" height="1" fill="#e02828"/><rect x="16" y="10" width="1" height="1" fill="#08081c"/><rect x="17" y="10" width="1" height="1" fill="#f0e070"/><rect x="18" y="10" width="2" height="1" fill="#08081c"/><rect x="20" y="10" width="1" height="1" fill="#50c050"/><rect x="21" y="10" width="1" height="1" fill="#08081c"/><rect x="6" y="11" width="5" height="1" fill="#08081c"/><rect x="11" y="11" width="1" height="1" fill="#d040d0"/><rect x="12" y="11" width="4" height="1" fill="#e02828"/><rect x="16" y="11" width="2" height="1" fill="#08081c"/><rect x="18" y="11" width="2" height="1" fill="#50c050"/><rect x="20" y="11" width="1" height="1" fill="#08081c"/><rect x="6" y="12" width="3" height="1" fill="#08081c"/><rect x="9" y="12" width="3" height="1" fill="#d040d0"/><rect x="12" y="12" width="3" height="1" fill="#e02828"/><rect x="15" y="12" width="2" height="1" fill="#f8e8a0"/><rect x="17" y="12" width="1" height="1" fill="#08081c"/><rect x="18" y="12" width="1" height="1" fill="#50c050"/><rect x="19" y="12" width="2" height="1" fill="#08081c"/><rect x="7" y="13" width="2" height="1" fill="#08081c"/><rect x="9" y="13" width="3" height="1" fill="#d040d0"/><rect x="12" y="13" width="3" height="1" fill="#08081c"/><rect x="15" y="13" width="2" height="1" fill="#f8e8a0"/><rect x="17" y="13" width="1" height="1" fill="#08081c"/><rect x="18" y="13" width="1" height="1" fill="#50c050"/><rect x="19" y="13" width="2" height="1" fill="#08081c"/><rect x="8" y="14" width="12" height="1" fill="#08081c"/><rect x="9" y="15" width="2" height="1" fill="#08081c"/><rect x="11" y="15" width="2" height="1" fill="#ffffff"/><rect x="13" y="15" width="3" height="1" fill="#08081c"/><rect x="16" y="15" width="2" height="1" fill="#ffffff"/><rect x="18" y="15" width="1" height="1" fill="#08081c"/><rect x="9" y="16" width="1" height="1" fill="#08081c"/><rect x="10" y="16" width="3" height="1" fill="#ffffff"/><rect x="13" y="16" width="1" height="1" fill="#08081c"/><rect x="14" y="16" width="1" height="1" fill="#ffffff"/><rect x="15" y="16" width="1" height="1" fill="#08081c"/><rect x="16" y="16" width="2" height="1" fill="#ffffff"/><rect x="18" y="16" width="1" height="1" fill="#08081c"/><rect x="9" y="17" width="2" height="1" fill="#ffffff"/><rect x="11" y="17" width="1" height="1" fill="#08081c"/><rect x="12" y="17" width="3" height="1" fill="#ffffff"/><rect x="15" y="17" width="1" height="1" fill="#08081c"/><rect x="16" y="17" width="2" height="1" fill="#ffffff"/><rect x="18" y="17" width="1" height="1" fill="#08081c"/><rect x="9" y="18" width="10" height="1" fill="#08081c"/><rect x="61" y="65" width="7" height="1" fill="#ffffff"/><rect x="61" y="65" width="1" height="17" fill="#ffffff"/><rect x="62" y="81" width="6" height="1" fill="#808080"/><rect x="67" y="66" width="1" height="16" fill="#808080"/><line x1="68.5" y1="69" x2="74" y2="63" stroke="#ffffff" stroke-width="1.7" shape-rendering="geometricPrecision" stroke-linecap="square"/><rect x="68" y="69" width="1" height="9" fill="#ffffff"/><line x1="69.5" y1="78" x2="73.5" y2="82.5" stroke="#808080" stroke-width="1.3" shape-rendering="geometricPrecision" stroke-linecap="square"/><rect x="74" y="62" width="1" height="23" fill="#ffffff"/><rect x="75" y="62" width="1" height="23" fill="#808080"/><rect x="191" y="63" width="31" height="2" fill="#808080"/><rect x="191" y="63" width="2" height="40" fill="#808080"/><rect x="191" y="101" width="32" height="2" fill="#ffffff"/><rect x="221" y="63" width="2" height="5" fill="#ffffff"/><rect x="221" y="87" width="2" height="3" fill="#ffffff"/><rect x="221" y="97" width="2" height="6" fill="#ffffff"/><rect x="209" y="68" width="8" height="2" fill="#ffffff"/><rect x="209" y="68" width="2" height="18" fill="#ffffff"/><rect x="210" y="85" width="7" height="1" fill="#808080"/><rect x="216" y="69" width="1" height="17" fill="#808080"/><line x1="217.5" y1="72.5" x2="222" y2="68" stroke="#ffffff" stroke-width="2" shape-rendering="geometricPrecision" stroke-linecap="square"/><line x1="217.5" y1="81" x2="222.5" y2="86" stroke="#808080" stroke-width="1.6" shape-rendering="geometricPrecision" stroke-linecap="square"/><rect x="211" y="89" width="12" height="1" fill="#ffffff"/><rect x="211" y="89" width="2" height="8" fill="#ffffff"/><rect x="214" y="90" width="1" height="1" fill="#ffffff"/><rect x="214" y="95" width="1" height="1" fill="#808080"/><rect x="216" y="90" width="1" height="1" fill="#ffffff"/><rect x="216" y="95" width="1" height="1" fill="#808080"/><rect x="218" y="90" width="1" height="1" fill="#ffffff"/><rect x="218" y="95" width="1" height="1" fill="#808080"/><rect x="220" y="90" width="1" height="1" fill="#ffffff"/><rect x="220" y="95" width="1" height="1" fill="#808080"/><rect x="222" y="90" width="1" height="1" fill="#ffffff"/><rect x="222" y="95" width="1" height="1" fill="#808080"/><rect x="212" y="96" width="11" height="1" fill="#808080"/><rect x="444" y="63" width="39" height="2" fill="#808080"/><rect x="444" y="63" width="2" height="40" fill="#808080"/><rect x="444" y="101" width="40" height="2" fill="#ffffff"/><rect x="482" y="63" width="2" height="6" fill="#ffffff"/><rect x="482" y="77" width="2" height="26" fill="#ffffff"/><rect x="472" y="68" width="12" height="1" fill="#ffffff"/><rect x="472" y="68" width="2" height="9" fill="#ffffff"/><rect x="475" y="69" width="1" height="1" fill="#ffffff"/><rect x="475" y="75" width="1" height="1" fill="#808080"/><rect x="477" y="69" width="1" height="1" fill="#ffffff"/><rect x="477" y="75" width="1" height="1" fill="#808080"/><rect x="479" y="69" width="1" height="1" fill="#ffffff"/><rect x="479" y="75" width="1" height="1" fill="#808080"/><rect x="481" y="69" width="1" height="1" fill="#ffffff"/><rect x="481" y="75" width="1" height="1" fill="#808080"/><rect x="483" y="69" width="1" height="1" fill="#ffffff"/><rect x="483" y="75" width="1" height="1" fill="#808080"/><rect x="473" y="76" width="11" height="1" fill="#808080"/><rect x="444" y="80" width="10" height="2" fill="#ffffff"/><rect x="446" y="82" width="8" height="1" fill="#808080"/><rect x="455" y="81" width="1" height="1" fill="#ffffff"/><rect x="457" y="81" width="1" height="1" fill="#ffffff"/><rect x="459" y="81" width="1" height="1" fill="#ffffff"/><rect x="461" y="81" width="1" height="1" fill="#ffffff"/><rect x="463" y="81" width="1" height="1" fill="#ffffff"/><rect x="465" y="81" width="1" height="1" fill="#ffffff"/><rect x="467" y="81" width="1" height="1" fill="#ffffff"/><rect x="469" y="81" width="1" height="1" fill="#ffffff"/><rect x="471" y="81" width="1" height="1" fill="#ffffff"/><rect x="473" y="80" width="9" height="1" fill="#ffffff"/><rect x="473" y="81" width="9" height="2" fill="#808080"/><line x1="454.5" y1="82.5" x2="461.5" y2="89.5" stroke="#ffffff" stroke-width="2" shape-rendering="geometricPrecision" stroke-linecap="square"/><line x1="472" y1="83" x2="466" y2="89" stroke="#808080" stroke-width="1.6" shape-rendering="geometricPrecision" stroke-linecap="square"/><rect x="462" y="89" width="4" height="1" fill="#808080"/><rect x="458" y="90" width="13" height="1" fill="#ffffff"/><rect x="458" y="90" width="1" height="6" fill="#ffffff"/><rect x="459" y="95" width="12" height="1" fill="#808080"/><rect x="470" y="91" width="1" height="5" fill="#808080"/><rect x="499" y="63" width="28" height="2" fill="#808080"/><rect x="499" y="63" width="2" height="40" fill="#808080"/><rect x="499" y="101" width="29" height="2" fill="#ffffff"/><rect x="526" y="63" width="2" height="3" fill="#ffffff"/><rect x="515" y="67" width="6" height="2" fill="#ffffff"/><rect x="515" y="67" width="2" height="13" fill="#ffffff"/><rect x="516" y="79" width="5" height="1" fill="#808080"/><rect x="520" y="68" width="1" height="12" fill="#808080"/><line x1="522" y1="72.5" x2="527.5" y2="66.5" stroke="#ffffff" stroke-width="2" shape-rendering="geometricPrecision" stroke-linecap="square"/><line x1="522.5" y1="74.5" x2="527.5" y2="80" stroke="#808080" stroke-width="1.6" shape-rendering="geometricPrecision" stroke-linecap="square"/><line x1="527.5" y1="81.5" x2="521.8" y2="87.5" stroke="#ffffff" stroke-width="2" shape-rendering="geometricPrecision" stroke-linecap="square"/><rect x="521" y="87" width="2" height="7" fill="#ffffff"/><line x1="522.5" y1="94.5" x2="527.5" y2="100" stroke="#808080" stroke-width="1.6" shape-rendering="geometricPrecision" stroke-linecap="square"/><rect x="625" y="63" width="31" height="2" fill="#808080"/><rect x="625" y="63" width="2" height="40" fill="#808080"/><rect x="625" y="101" width="32" height="2" fill="#ffffff"/><rect x="655" y="63" width="2" height="6" fill="#ffffff"/><rect x="655" y="89" width="2" height="14" fill="#ffffff"/><rect x="643" y="71" width="7" height="2" fill="#ffffff"/><rect x="643" y="71" width="2" height="17" fill="#ffffff"/><rect x="644" y="87" width="6" height="1" fill="#808080"/><rect x="649" y="72" width="1" height="16" fill="#808080"/><line x1="651" y1="76.5" x2="656.5" y2="70" stroke="#ffffff" stroke-width="2" shape-rendering="geometricPrecision" stroke-linecap="square"/><line x1="651.5" y1="83" x2="656.5" y2="89" stroke="#808080" stroke-width="1.6" shape-rendering="geometricPrecision" stroke-linecap="square"/><rect x="823" y="64" width="8" height="1" fill="#ffffff"/><rect x="823" y="64" width="2" height="31" fill="#ffffff"/><rect x="825" y="93" width="6" height="2" fill="#808080"/><rect x="830" y="65" width="1" height="30" fill="#808080"/><rect x="827" y="66" width="3" height="1" fill="#808080"/><rect x="826" y="69" width="4" height="1" fill="#808080"/><rect x="827" y="72" width="3" height="1" fill="#808080"/><rect x="826" y="75" width="4" height="1" fill="#808080"/><rect x="827" y="77" width="3" height="1" fill="#808080"/><rect x="826" y="80" width="4" height="1" fill="#808080"/><rect x="827" y="83" width="3" height="1" fill="#808080"/><rect x="826" y="86" width="4" height="1" fill="#808080"/><rect x="827" y="88" width="3" height="1" fill="#808080"/><rect x="826" y="91" width="4" height="1" fill="#808080"/><rect x="833" y="96" width="24" height="1" fill="#ffffff"/><rect x="833" y="96" width="2" height="7" fill="#ffffff"/><rect x="835" y="101" width="22" height="2" fill="#808080"/><rect x="856" y="97" width="1" height="6" fill="#808080"/><rect x="836" y="98" width="1" height="3" fill="#808080"/><rect x="839" y="98" width="1" height="2" fill="#808080"/><rect x="842" y="98" width="1" height="3" fill="#808080"/><rect x="845" y="98" width="1" height="2" fill="#808080"/><rect x="848" y="98" width="1" height="3" fill="#808080"/><rect x="851" y="98" width="1" height="2" fill="#808080"/><rect x="854" y="98" width="1" height="3" fill="#808080"/><line x1="833.5" y1="70.5" x2="851.5" y2="70.5" stroke="#808080" stroke-width="1.2" shape-rendering="geometricPrecision" stroke-linecap="square"/><line x1="833.5" y1="70.5" x2="833.5" y2="93.5" stroke="#808080" stroke-width="1.2" shape-rendering="geometricPrecision" stroke-linecap="square"/><line x1="833.5" y1="93.5" x2="851.5" y2="93.5" stroke="#808080" stroke-width="1.2" shape-rendering="geometricPrecision" stroke-linecap="square"/><line x1="851.5" y1="70.5" x2="851.5" y2="93.5" stroke="#808080" stroke-width="1.2" shape-rendering="geometricPrecision" stroke-linecap="square"/><line x1="839.5" y1="64.5" x2="857.5" y2="64.5" stroke="#808080" stroke-width="1.2" shape-rendering="geometricPrecision" stroke-linecap="square"/><line x1="857.5" y1="64.5" x2="857.5" y2="87.5" stroke="#808080" stroke-width="1.2" shape-rendering="geometricPrecision" stroke-linecap="square"/><line x1="833.5" y1="70.5" x2="839.5" y2="64.5" stroke="#808080" stroke-width="1.2" shape-rendering="geometricPrecision" stroke-linecap="square"/><line x1="851.5" y1="70.5" x2="857.5" y2="64.5" stroke="#808080" stroke-width="1.2" shape-rendering="geometricPrecision" stroke-linecap="square"/><line x1="851.5" y1="93.5" x2="857.5" y2="87.5" stroke="#808080" stroke-width="1.2" shape-rendering="geometricPrecision" stroke-linecap="square"/><rect x="839" y="66" width="1" height="1" fill="#808080"/><rect x="839" y="69" width="1" height="1" fill="#808080"/><rect x="839" y="72" width="1" height="1" fill="#808080"/><rect x="839" y="75" width="1" height="1" fill="#808080"/><rect x="839" y="78" width="1" height="1" fill="#808080"/><rect x="839" y="81" width="1" height="1" fill="#808080"/><rect x="839" y="84" width="1" height="1" fill="#808080"/><rect x="839" y="87" width="1" height="1" fill="#808080"/><rect x="841" y="87" width="1" height="1" fill="#808080"/><rect x="844" y="87" width="1" height="1" fill="#808080"/><rect x="847" y="87" width="1" height="1" fill="#808080"/><rect x="850" y="87" width="1" height="1" fill="#808080"/><rect x="853" y="87" width="1" height="1" fill="#808080"/><rect x="856" y="87" width="1" height="1" fill="#808080"/><rect x="837" y="89" width="1" height="1" fill="#808080"/><rect x="835" y="91" width="1" height="1" fill="#808080"/><rect x="482" y="312" width="7" height="1" fill="#ffffff"/><rect x="481" y="313" width="1" height="1" fill="#ffffff"/><rect x="482" y="313" width="6" height="1" fill="#a8a8a8"/><rect x="488" y="313" width="1" height="1" fill="#ffffff"/><rect x="489" y="313" width="1" height="1" fill="#000000"/><rect x="480" y="314" width="1" height="1" fill="#ffffff"/><rect x="481" y="314" width="3" height="1" fill="#a8a8a8"/><rect x="484" y="314" width="1" height="1" fill="#ffffff"/><rect x="485" y="314" width="3" height="1" fill="#a8a8a8"/><rect x="488" y="314" width="1" height="1" fill="#909090"/><rect x="489" y="314" width="1" height="1" fill="#ffffff"/><rect x="490" y="314" width="1" height="1" fill="#000000"/><rect x="475" y="315" width="6" height="1" fill="#ffffff"/><rect x="481" y="315" width="3" height="1" fill="#a8a8a8"/><rect x="484" y="315" width="1" height="1" fill="#ffffff"/><rect x="485" y="315" width="2" height="1" fill="#a8a8a8"/><rect x="487" y="315" width="2" height="1" fill="#909090"/><rect x="489" y="315" width="5" height="1" fill="#ffffff"/><rect x="474" y="316" width="1" height="1" fill="#ffffff"/><rect x="475" y="316" width="6" height="1" fill="#dcdcdc"/><rect x="481" y="316" width="3" height="1" fill="#a8a8a8"/><rect x="484" y="316" width="1" height="1" fill="#ffffff"/><rect x="485" y="316" width="2" height="1" fill="#a8a8a8"/><rect x="487" y="316" width="1" height="1" fill="#909090"/><rect x="488" y="316" width="6" height="1" fill="#dcdcdc"/><rect x="494" y="316" width="1" height="1" fill="#ffffff"/><rect x="474" y="317" width="1" height="1" fill="#ffffff"/><rect x="475" y="317" width="7" height="1" fill="#dcdcdc"/><rect x="482" y="317" width="2" height="1" fill="#a8a8a8"/><rect x="484" y="317" width="1" height="1" fill="#dcdcdc"/><rect x="485" y="317" width="1" height="1" fill="#a8a8a8"/><rect x="486" y="317" width="1" height="1" fill="#909090"/><rect x="487" y="317" width="7" height="1" fill="#dcdcdc"/><rect x="494" y="317" width="1" height="1" fill="#ffffff"/><rect x="474" y="318" width="1" height="1" fill="#ffffff"/><rect x="475" y="318" width="19" height="1" fill="#dcdcdc"/><rect x="494" y="318" width="1" height="1" fill="#ffffff"/><rect x="474" y="319" width="3" height="1" fill="#ffffff"/><rect x="477" y="319" width="3" height="1" fill="#000000"/><rect x="480" y="319" width="9" height="1" fill="#ffffff"/><rect x="489" y="319" width="3" height="1" fill="#000000"/><rect x="492" y="319" width="3" height="1" fill="#ffffff"/><rect x="474" y="320" width="21" height="1" fill="#000000"/><rect x="477" y="321" width="3" height="1" fill="#000000"/><rect x="489" y="321" width="3" height="1" fill="#000000"/><rect x="482" y="551" width="7" height="1" fill="#ffffff"/><rect x="481" y="552" width="1" height="1" fill="#ffffff"/><rect x="482" y="552" width="6" height="1" fill="#a8a8a8"/><rect x="488" y="552" width="1" height="1" fill="#ffffff"/><rect x="489" y="552" width="1" height="1" fill="#000000"/><rect x="480" y="553" width="1" height="1" fill="#ffffff"/><rect x="481" y="553" width="3" height="1" fill="#a8a8a8"/><rect x="484" y="553" width="1" height="1" fill="#ffffff"/><rect x="485" y="553" width="3" height="1" fill="#a8a8a8"/><rect x="488" y="553" width="1" height="1" fill="#909090"/><rect x="489" y="553" width="1" height="1" fill="#ffffff"/><rect x="490" y="553" width="1" height="1" fill="#000000"/><rect x="475" y="554" width="6" height="1" fill="#ffffff"/><rect x="481" y="554" width="3" height="1" fill="#a8a8a8"/><rect x="484" y="554" width="1" height="1" fill="#ffffff"/><rect x="485" y="554" width="2" height="1" fill="#a8a8a8"/><rect x="487" y="554" width="2" height="1" fill="#909090"/><rect x="489" y="554" width="5" height="1" fill="#ffffff"/><rect x="474" y="555" width="1" height="1" fill="#ffffff"/><rect x="475" y="555" width="6" height="1" fill="#dcdcdc"/><rect x="481" y="555" width="3" height="1" fill="#a8a8a8"/><rect x="484" y="555" width="1" height="1" fill="#ffffff"/><rect x="485" y="555" width="2" height="1" fill="#a8a8a8"/><rect x="487" y="555" width="1" height="1" fill="#909090"/><rect x="488" y="555" width="6" height="1" fill="#dcdcdc"/><rect x="494" y="555" width="1" height="1" fill="#ffffff"/><rect x="474" y="556" width="1" height="1" fill="#ffffff"/><rect x="475" y="556" width="7" height="1" fill="#dcdcdc"/><rect x="482" y="556" width="2" height="1" fill="#a8a8a8"/><rect x="484" y="556" width="1" height="1" fill="#dcdcdc"/><rect x="485" y="556" width="1" height="1" fill="#a8a8a8"/><rect x="486" y="556" width="1" height="1" fill="#909090"/><rect x="487" y="556" width="7" height="1" fill="#dcdcdc"/><rect x="494" y="556" width="1" height="1" fill="#ffffff"/><rect x="474" y="557" width="1" height="1" fill="#ffffff"/><rect x="475" y="557" width="19" height="1" fill="#dcdcdc"/><rect x="494" y="557" width="1" height="1" fill="#ffffff"/><rect x="474" y="558" width="3" height="1" fill="#ffffff"/><rect x="477" y="558" width="3" height="1" fill="#000000"/><rect x="480" y="558" width="9" height="1" fill="#ffffff"/><rect x="489" y="558" width="3" height="1" fill="#000000"/><rect x="492" y="558" width="3" height="1" fill="#ffffff"/><rect x="474" y="559" width="21" height="1" fill="#000000"/><rect x="477" y="560" width="3" height="1" fill="#000000"/><rect x="489" y="560" width="3" height="1" fill="#000000"/></svg>
</div>
</body></html>
